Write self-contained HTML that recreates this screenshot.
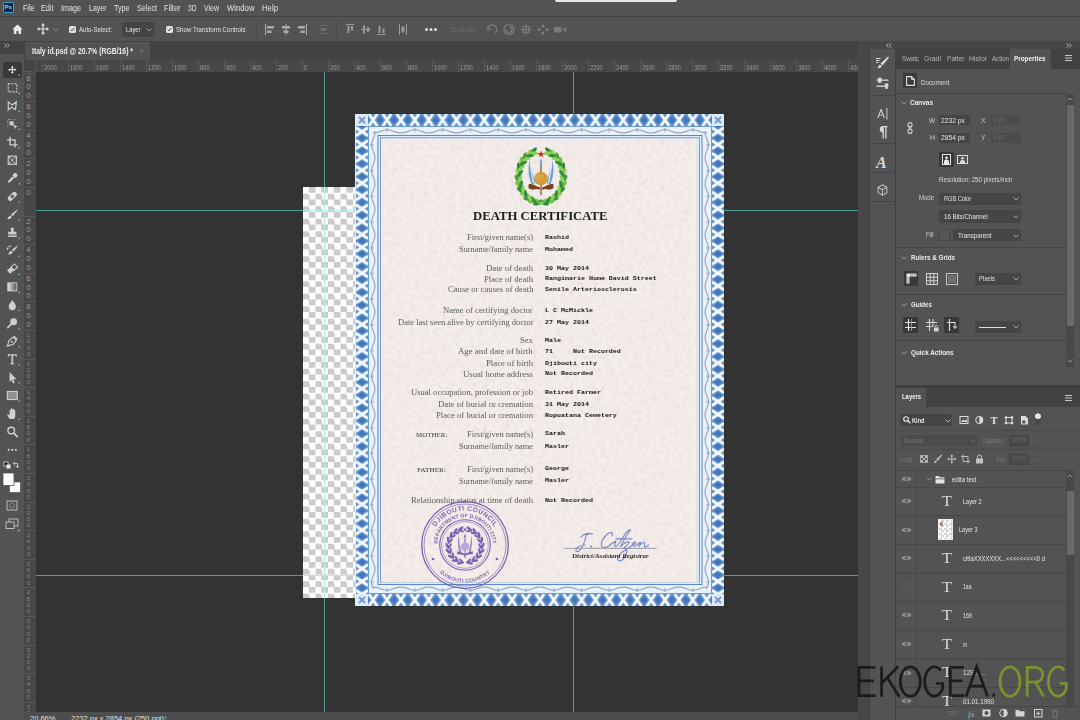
<!DOCTYPE html>
<html><head><meta charset="utf-8">
<style>
*{box-sizing:border-box;margin:0;padding:0}
html,body{width:1080px;height:720px;overflow:hidden;background:#535353;font-family:"Liberation Sans",sans-serif;color:#dcdcdc}
.a{position:absolute}
.t{position:absolute;white-space:nowrap;font-size:9px;line-height:10px;color:#dedede;transform-origin:0 50%}
.b{font-weight:bold}
.dim{color:#787878}
#menubar{left:0;top:0;width:1080px;height:16px;background:#535353}
#optbar{left:0;top:17px;width:1080px;height:24px;background:#535353}
#sep1{left:0;top:16px;width:1080px;height:1px;background:#434343}
#tabbar{left:0;top:41px;width:1080px;height:19px;background:#424242}
#tab{left:25px;top:42px;width:125px;height:18px;background:#535353}
#tools{left:0;top:54px;width:24px;height:666px;background:#535353}
#hruler{left:24px;top:60px;width:834px;height:12px;background:#474747;overflow:hidden}
#vruler{left:24px;top:72px;width:12px;height:640px;background:#474747;overflow:hidden}
#canvas{left:36px;top:72px;width:822px;height:640px;background:#333333;overflow:hidden}
#status{left:24px;top:712px;width:834px;height:8px;background:#4d4d4d;overflow:hidden}
#rgap{left:858px;top:41px;width:222px;height:679px;background:#474747}
#istrip{left:870px;top:49px;width:25px;height:671px;background:#535353}
#props{left:896px;top:49px;width:184px;height:337px;background:#535353;overflow:hidden}
#layers{left:896px;top:388px;width:184px;height:332px;background:#535353;overflow:hidden}
.hl{position:absolute;height:1px;background:#464646}
.rt{position:absolute;top:0;width:1px;height:12px;background:#585858}
.rl{position:absolute;top:2.500px;font-size:7px;line-height:10px;color:#9c9c9c;white-space:nowrap;transform:scaleX(.82);transform-origin:0 50%}
.vt{position:absolute;left:0;width:12px;height:1px;background:#585858}
.vl{position:absolute;left:1.5px;font-size:8px;line-height:8.8px;color:#9a9a9a;width:6px;text-align:center;word-break:break-all}
.g{position:absolute;background:#4f9f98}
.inp{position:absolute;background:#454545;border-radius:1px}
.sel{position:absolute;background:#3a3a3a;border-radius:1px}
</style></head><body>

<!-- base regions -->
<div id="menubar" class="a"></div>
<div id="sep1" class="a"></div>
<div id="optbar" class="a"></div>
<div id="tabbar" class="a"></div>
<div id="tab" class="a"></div>
<div id="tools" class="a"></div>
<div id="rgap" class="a"></div>
<div id="istrip" class="a"></div>
<!-- menubar -->
<div class="a" style="left:3px;top:2px;width:11px;height:11px;background:#0b2a3a;border:1px solid #3aa0d8;border-radius:2px"></div>
<div class="t b" style="left:4.5px;top:3px;font-size:6px;color:#9fd6ff;line-height:9px">Ps</div>
<div class="t" style="left:22.5px;top:3.1px;font-size:9px;line-height:10.8px;color:#e2e2e2;transform:scaleX(0.793);">File</div>
<div class="t" style="left:41px;top:3.1px;font-size:9px;line-height:10.8px;color:#e2e2e2;transform:scaleX(0.806);">Edit</div>
<div class="t" style="left:61px;top:3.1px;font-size:9px;line-height:10.8px;color:#e2e2e2;transform:scaleX(0.800);">Image</div>
<div class="t" style="left:89px;top:3.1px;font-size:9px;line-height:10.8px;color:#e2e2e2;transform:scaleX(0.777);">Layer</div>
<div class="t" style="left:114px;top:3.1px;font-size:9px;line-height:10.8px;color:#e2e2e2;transform:scaleX(0.794);">Type</div>
<div class="t" style="left:137px;top:3.1px;font-size:9px;line-height:10.8px;color:#e2e2e2;transform:scaleX(0.800);">Select</div>
<div class="t" style="left:164px;top:3.1px;font-size:9px;line-height:10.8px;color:#e2e2e2;transform:scaleX(0.825);">Filter</div>
<div class="t" style="left:188px;top:3.1px;font-size:9px;line-height:10.8px;color:#e2e2e2;transform:scaleX(0.739);">3D</div>
<div class="t" style="left:204px;top:3.1px;font-size:9px;line-height:10.8px;color:#e2e2e2;transform:scaleX(0.775);">View</div>
<div class="t" style="left:227px;top:3.1px;font-size:9px;line-height:10.8px;color:#e2e2e2;transform:scaleX(0.859);">Window</div>
<div class="t" style="left:262px;top:3.1px;font-size:9px;line-height:10.8px;color:#e2e2e2;transform:scaleX(0.864);">Help</div>
<div class="a" style="left:555px;top:0;width:122px;height:2px;background:#e6e6e6;border-radius:0 0 2px 2px"></div>
<!-- options bar -->
<svg class="a" style="left:12px;top:24px" width="11" height="10.500" viewBox="0 0 13 12"><path d="M6.5 0.5L0.5 6H2.2V11.5H5.2V8H7.8V11.5H10.8V6H12.5Z" fill="#e8e8e8"/></svg>
<svg class="a" style="left:37px;top:23px" width="12" height="12" viewBox="0 0 12 12"><path d="M6 0L8 2.4H6.6V5.4H9.6V4L12 6L9.6 8V6.6H6.6V9.6H8L6 12L4 9.6H5.4V6.6H2.4V8L0 6L2.4 4V5.4H5.4V2.4H4Z" fill="#e0e0e0"/></svg>
<svg class="a" style="left:53px;top:28px" width="6" height="4" viewBox="0 0 6 4"><path d="M0.5 0.5L3 3L5.5 0.5" stroke="#8a8a8a" fill="none"/></svg>
<div class="a" style="left:69px;top:26px;width:7px;height:7px;background:#e0e0e0;border-radius:1.5px"></div>
<svg class="a" style="left:70px;top:27px" width="5" height="5" viewBox="0 0 5 5"><path d="M0.7 2.5L2 3.8L4.3 1" stroke="#444" stroke-width="1" fill="none"/></svg>
<div class="t" style="left:79px;top:24.7px;font-size:8px;line-height:9.6px;color:#e2e2e2;transform:scaleX(0.757);">Auto-Select:</div>
<div class="a" style="left:122px;top:22px;width:33px;height:15px;background:#454545;border-radius:2px"></div>
<div class="t" style="left:126px;top:24.7px;font-size:8px;line-height:9.6px;color:#e2e2e2;transform:scaleX(0.725);">Layer</div>
<svg class="a" style="left:146px;top:28px" width="6" height="4" viewBox="0 0 6 4"><path d="M0.5 0.5L3 3L5.5 0.5" stroke="#9a9a9a" fill="none"/></svg>
<div class="a" style="left:166px;top:26px;width:7px;height:7px;background:#e0e0e0;border-radius:1.5px"></div>
<svg class="a" style="left:167px;top:27px" width="5" height="5" viewBox="0 0 5 5"><path d="M0.7 2.5L2 3.8L4.3 1" stroke="#444" stroke-width="1" fill="none"/></svg>
<div class="t" style="left:175.5px;top:24.7px;font-size:8px;line-height:9.6px;color:#e2e2e2;transform:scaleX(0.770);">Show Transform Controls</div>
<div class="a" style="left:255.500px;top:22px;width:1px;height:15px;background:#484848"></div>
<!-- align icons -->
<svg class="a" style="left:264px;top:23px" width="150" height="13" viewBox="0 0 150 13">
<g fill="#ababab">
<rect x="1" y="1" width="1" height="11"/><rect x="3" y="3" width="7" height="2.5"/><rect x="3" y="7.5" width="4.5" height="2.5"/>
<rect x="21.5" y="1" width="1" height="11"/><rect x="18" y="3" width="8" height="2.5"/><rect x="19.5" y="7.5" width="5" height="2.5"/>
<rect x="42" y="1" width="1" height="11"/><rect x="34" y="3" width="7" height="2.5"/><rect x="36.5" y="7.5" width="4.5" height="2.5"/>
</g>
<g fill="#6c6c6c"><rect x="55" y="2" width="9" height="1"/><rect x="55" y="10" width="9" height="1"/><rect x="56.5" y="5" width="6" height="3"/></g>
<g fill="#9a9a9a">
<rect x="82" y="1" width="8" height="1"/><rect x="83.5" y="3" width="2" height="7"/><rect x="87" y="3" width="2" height="4.5"/>
<rect x="97" y="6" width="10" height="1"/><rect x="99" y="2.5" width="2" height="8"/><rect x="103" y="4" width="2" height="5"/>
<rect x="113" y="11" width="9" height="1"/><rect x="114.500" y="3" width="2" height="7"/><rect x="118.500" y="5.500" width="2" height="4.500"/>
<rect x="135" y="1" width="1" height="11"/><rect x="142" y="1" width="1" height="11"/><rect x="137.500" y="3.500" width="3" height="6"/>
</g></svg>
<div class="a" style="left:336px;top:22px;width:1px;height:15px;background:#484848"></div>
<div class="a" style="left:425px;top:28px;width:2.5px;height:2.5px;border-radius:2px;background:#e0e0e0;box-shadow:4.5px 0 0 #e0e0e0,9px 0 0 #e0e0e0"></div>
<div class="t" style="left:450px;top:25px;font-size:7.5px;line-height:9px;color:#6c6c6c;transform:scaleX(0.800);">3D Mode:</div>
<svg class="a" style="left:485px;top:22px" width="90" height="15" viewBox="0 0 90 15"><g stroke="#7c7c7c" fill="none" stroke-width="1.2">
<path d="M3 9A4.500 4.500 0 1 1 10 11M3 5L6 8"/><circle cx="24" cy="7.500" r="5"/><path d="M21 7.500A3 3 0 1 0 24 4.500"/>
<path d="M41 2V13M35.500 7.500H46.500M38 4.500H44V10.500H38Z"/>
</g><g fill="#7c7c7c"><circle cx="58" cy="4" r="1.600"/><circle cx="54" cy="7.500" r="1.600"/><circle cx="62" cy="7.500" r="1.600"/><circle cx="58" cy="11" r="1.600"/>
<rect x="69" y="5" width="7.500" height="5.500" rx="1"/><path d="M77.500 7.500L81 4.800V10.500Z"/></g></svg>
<!-- tab -->
<svg class="a" style="left:3.500px;top:42.500px" width="6" height="5" viewBox="0 0 6 5"><path d="M0.500 0.500L2.300 2.500L0.500 4.500M3.300 0.500L5.100 2.500L3.300 4.500" stroke="#c4c4c4" stroke-width=".9" fill="none"/></svg>
<div class="t" style="left:32px;top:45.9px;font-size:8.5px;line-height:10.2px;color:#ececec;font-weight:bold;transform:scaleX(0.802);">Italy id.psd @ 20.7% (RGB/16) *</div>
<div class="t" style="left:139px;top:45.500px;font-size:8px;color:#808080">&#215;</div>

<!-- tools -->
<div class="a" style="left:3px;top:61.500px;width:19px;height:16.500px;background:#383838;border-radius:2px"></div>
<svg class="a" style="left:0;top:0" width="24" height="540" viewBox="0 0 24 540"><g transform="translate(12.3,69.7) scale(.9)"><path transform="scale(.82)" d="M0 -5.500L2 -3.100H0.700V-0.700H3.100V-2L5.500 0L3.100 2V0.700H0.700V3.100H2L0 5.500L-2 3.100H-0.700V0.700H-3.100V2L-5.500 0L-3.100 -2V-0.700H-0.700V-3.100H-2Z" fill="#f0f0f0"/><path d="M8.300 4.800L8.300 6.800L6.300 6.800Z" fill="#bdbdbd"/></g><g transform="translate(12.3,87.8) scale(.9)"><rect x="-4.500" y="-4.500" width="9.500" height="9" fill="none" stroke="#cfcfcf" stroke-width="1.200" stroke-dasharray="2.200 1.300"/><path d="M8.300 4.800L8.300 6.800L6.300 6.800Z" fill="#bdbdbd"/></g><g transform="translate(12.3,105.9) scale(.9)"><path d="M-4.500 -4.500L0 -1L4.500 -4.500L3.500 4L-1 1.500L-4.500 4.500Z" fill="none" stroke="#cfcfcf" stroke-width="1.300"/><path d="M8.300 4.800L8.300 6.800L6.300 6.800Z" fill="#bdbdbd"/></g><g transform="translate(12.3,124.0) scale(.9)"><path d="M-5 -1V-5H-1M1.500 -5H3.500M-5 1.500V3.500" fill="none" stroke="#9a9a9a" stroke-width="1"/><rect x="-3" y="-3" width="4.500" height="4.500" fill="#cfcfcf"/><path d="M1 0.500L6 3L3.700 3.700L3 6Z" fill="#cfcfcf"/><path d="M8.300 4.800L8.300 6.800L6.300 6.800Z" fill="#bdbdbd"/></g><g transform="translate(12.3,142.1) scale(.9)"><path d="M-2.500 -6V3H6M-6 -2.500H3V6" fill="none" stroke="#cfcfcf" stroke-width="1.500"/><path d="M8.300 4.800L8.300 6.800L6.300 6.800Z" fill="#bdbdbd"/></g><g transform="translate(12.3,160.2) scale(.9)"><rect x="-4.500" y="-4.500" width="9" height="9" fill="none" stroke="#cfcfcf" stroke-width="1.300"/><path d="M-4.500 -4.500L4.500 4.500M4.500 -4.500L-4.500 4.500" stroke="#cfcfcf" stroke-width="1.100"/></g><g transform="translate(12.3,178.3) scale(.9)"><path d="M-5 5L-4.300 2.500L0.500 -2.300L2.300 -0.500L-2.500 4.300Z" fill="#cfcfcf"/><path d="M0 -3.500L1.500 -5A1.800 1.800 0 0 1 5 -1.500L3.500 0Z" fill="#cfcfcf"/><path d="M8.300 4.800L8.300 6.800L6.300 6.800Z" fill="#bdbdbd"/></g><g transform="translate(12.3,196.4) scale(.9)"><g transform="rotate(-45)"><rect x="-6" y="-2.800" width="12" height="5.600" rx="2.600" fill="#cfcfcf"/><rect x="-1.800" y="-1.800" width="3.600" height="3.600" fill="#6a6a6a"/></g><path d="M8.300 4.800L8.300 6.800L6.300 6.800Z" fill="#bdbdbd"/></g><g transform="translate(12.3,214.5) scale(.9)"><path d="M5.500 -5.500L6 -5L0.500 2L-1.500 0Z" fill="#cfcfcf"/><path d="M-2.300 1L-0.500 2.800C-1.500 5 -4 5.500 -6 5C-4.500 4 -4.500 2 -2.300 1Z" fill="#cfcfcf"/><path d="M8.300 4.800L8.300 6.800L6.300 6.800Z" fill="#bdbdbd"/></g><g transform="translate(12.3,232.6) scale(.9)"><path d="M-1.800 -5.500H1.800L1.200 -1H4.500V2H-4.500V-1H-1.200Z" fill="#cfcfcf"/><rect x="-5" y="3.200" width="10" height="1.600" fill="#cfcfcf"/><path d="M8.300 4.800L8.300 6.800L6.300 6.800Z" fill="#bdbdbd"/></g><g transform="translate(12.3,250.7) scale(.9)"><path d="M5.500 -5.500L6 -5L1.500 1L-0.500 -1Z" fill="#cfcfcf"/><path d="M-1.300 0L0.500 1.800C-0.500 4 -3 4.500 -5 4C-3.500 3 -3.500 1 -1.300 0Z" fill="#cfcfcf"/><path d="M-5.500 -2A3.500 3.500 0 0 1 -1 -5" fill="none" stroke="#cfcfcf" stroke-width="1.100"/><path d="M-6.500 -3L-5.500 -0.500L-3.800 -2.500Z" fill="#cfcfcf"/><path d="M8.300 4.800L8.300 6.800L6.300 6.800Z" fill="#bdbdbd"/></g><g transform="translate(12.3,268.8) scale(.9)"><g transform="rotate(-40)"><rect x="-5.500" y="-2.600" width="6" height="5.200" fill="#cfcfcf"/><rect x="0.500" y="-2.600" width="5" height="5.200" fill="none" stroke="#cfcfcf" stroke-width="1.100"/></g><path d="M8.300 4.800L8.300 6.800L6.300 6.800Z" fill="#bdbdbd"/></g><g transform="translate(12.3,286.9) scale(.9)"><defs><linearGradient id="gr" x1="0" x2="1"><stop offset="0" stop-color="#e4e4e4"/><stop offset="1" stop-color="#555"/></linearGradient></defs><rect x="-5" y="-4.500" width="10" height="9" fill="url(#gr)" stroke="#cfcfcf" stroke-width="1"/><path d="M8.300 4.800L8.300 6.800L6.300 6.800Z" fill="#bdbdbd"/></g><g transform="translate(12.3,305.0) scale(.9)"><path d="M0 -5.500C2 -2.500 4 -0.500 4 1.800A4 4 0 0 1 -4 1.800C-4 -0.500 -2 -2.500 0 -5.500Z" fill="#cfcfcf"/><path d="M8.300 4.800L8.300 6.800L6.300 6.800Z" fill="#bdbdbd"/></g><g transform="translate(12.3,323.1) scale(.9)"><circle cx="1.500" cy="-1.500" r="3.800" fill="#cfcfcf"/><path d="M-1.500 1.500L-5 5" stroke="#cfcfcf" stroke-width="2" stroke-linecap="round"/><path d="M8.300 4.800L8.300 6.800L6.300 6.800Z" fill="#bdbdbd"/></g><g transform="translate(12.3,341.2) scale(.9)"><path d="M-5.500 5.500L-3.500 -1L1 -4.500L4.500 -1L1 3.500Z" fill="none" stroke="#cfcfcf" stroke-width="1.300"/><circle cx="-0.500" cy="0.500" r="1.100" fill="#cfcfcf"/><path d="M2 -5.500L5.500 -2" stroke="#cfcfcf" stroke-width="1.300"/><path d="M8.300 4.800L8.300 6.800L6.300 6.800Z" fill="#bdbdbd"/></g><g transform="translate(12.3,359.3) scale(.9)"><path d="M-5 -5.500H5V-2.800H4L3.600 -4.100H0.900V4.300L2.300 4.600V5.500H-2.300V4.600L-0.900 4.300V-4.100H-3.600L-4 -2.800H-5Z" fill="#cfcfcf"/><path d="M8.300 4.800L8.300 6.800L6.300 6.800Z" fill="#bdbdbd"/></g><g transform="translate(12.3,377.4) scale(.9)"><path d="M-3 -6L4.500 2H0.800L2.800 6L1 6.800L-1 2.800L-3 5Z" fill="#cfcfcf"/><path d="M8.300 4.800L8.300 6.800L6.300 6.800Z" fill="#bdbdbd"/></g><g transform="translate(12.3,395.5) scale(.9)"><rect x="-5.500" y="-4.500" width="11" height="9" fill="#8f8f8f" stroke="#cfcfcf" stroke-width="1.200"/><path d="M8.300 4.800L8.300 6.800L6.300 6.800Z" fill="#bdbdbd"/></g><g transform="translate(12.3,413.6) scale(.9)"><path d="M-3 6C-4 4 -6 2 -5.500 1C-4.800 0 -3.800 1 -3 2V-3.500C-3 -4.800 -1.500 -4.800 -1.500 -3.500V-5C-1.500 -6.300 0.200 -6.300 0.200 -5V-4.500C0.200 -5.800 1.800 -5.800 1.800 -4.500V-3.500C1.800 -4.600 3.300 -4.600 3.300 -3.500V2C3.300 4 2.500 5 2 6Z" fill="#cfcfcf"/><path d="M8.300 4.800L8.300 6.800L6.300 6.800Z" fill="#bdbdbd"/></g><g transform="translate(12.3,431.7) scale(.9)"><circle cx="-1.200" cy="-1.200" r="3.700" fill="none" stroke="#cfcfcf" stroke-width="1.500"/><path d="M1.700 1.700L5.500 5.500" stroke="#cfcfcf" stroke-width="2" stroke-linecap="round"/></g><g transform="translate(12.3,449.8) scale(.9)"><circle cx="-4" cy="0" r="1.200" fill="#cfcfcf"/><circle cx="0" cy="0" r="1.200" fill="#cfcfcf"/><circle cx="4" cy="0" r="1.200" fill="#cfcfcf"/></g><rect x="4" y="462" width="4" height="4" fill="#111" stroke="#ddd" stroke-width=".8"/><rect x="6.500" y="464.500" width="4" height="4" fill="#eee"/><path d="M13.500 463.500H17.500V467.500M15 461.800L13.200 463.500L15 465.200M15.800 466L17.500 467.800L19.200 466" fill="none" stroke="#ccc" stroke-width=".9"/><rect x="9.500" y="482" width="11" height="10.500" fill="#fff" stroke="#444" stroke-width=".6"/><rect x="3" y="473" width="11" height="12.500" fill="#fff" stroke="#555" stroke-width=".8"/><rect x="7" y="501" width="10" height="9" fill="none" stroke="#bbb" stroke-width="1"/><circle cx="12" cy="505.500" r="2.300" fill="none" stroke="#bbb" stroke-width=".9" stroke-dasharray="1 .8"/><rect x="9" y="519" width="9" height="7" fill="none" stroke="#bbb" stroke-width="1"/><rect x="6" y="522" width="8" height="6.500" fill="#535353" stroke="#bbb" stroke-width="1"/><path d="M19.500 529V531.200H17.300Z" fill="#bbb"/></svg>

<div id="hruler" class="a"><div class="rt" style="left:-8px"></div><div class="rl" style="left:-6px">2200</div><div class="rt" style="left:-1.5px;top:10px;background:#4f4f4f"></div><div class="rt" style="left:5.0px;top:9px;background:#4f4f4f"></div><div class="rt" style="left:11.5px;top:10px;background:#4f4f4f"></div><div class="rt" style="left:18px"></div><div class="rl" style="left:20px">2000</div><div class="rt" style="left:24.5px;top:10px;background:#4f4f4f"></div><div class="rt" style="left:31.0px;top:9px;background:#4f4f4f"></div><div class="rt" style="left:37.5px;top:10px;background:#4f4f4f"></div><div class="rt" style="left:44px"></div><div class="rl" style="left:46px">1800</div><div class="rt" style="left:50.5px;top:10px;background:#4f4f4f"></div><div class="rt" style="left:57.0px;top:9px;background:#4f4f4f"></div><div class="rt" style="left:63.5px;top:10px;background:#4f4f4f"></div><div class="rt" style="left:70px"></div><div class="rl" style="left:72px">1600</div><div class="rt" style="left:76.5px;top:10px;background:#4f4f4f"></div><div class="rt" style="left:83.0px;top:9px;background:#4f4f4f"></div><div class="rt" style="left:89.5px;top:10px;background:#4f4f4f"></div><div class="rt" style="left:96px"></div><div class="rl" style="left:98px">1400</div><div class="rt" style="left:102.5px;top:10px;background:#4f4f4f"></div><div class="rt" style="left:109.0px;top:9px;background:#4f4f4f"></div><div class="rt" style="left:115.5px;top:10px;background:#4f4f4f"></div><div class="rt" style="left:122px"></div><div class="rl" style="left:124px">1200</div><div class="rt" style="left:128.5px;top:10px;background:#4f4f4f"></div><div class="rt" style="left:135.0px;top:9px;background:#4f4f4f"></div><div class="rt" style="left:141.5px;top:10px;background:#4f4f4f"></div><div class="rt" style="left:148px"></div><div class="rl" style="left:150px">1000</div><div class="rt" style="left:154.5px;top:10px;background:#4f4f4f"></div><div class="rt" style="left:161.0px;top:9px;background:#4f4f4f"></div><div class="rt" style="left:167.5px;top:10px;background:#4f4f4f"></div><div class="rt" style="left:174px"></div><div class="rl" style="left:176px">800</div><div class="rt" style="left:180.5px;top:10px;background:#4f4f4f"></div><div class="rt" style="left:187.0px;top:9px;background:#4f4f4f"></div><div class="rt" style="left:193.5px;top:10px;background:#4f4f4f"></div><div class="rt" style="left:200px"></div><div class="rl" style="left:202px">600</div><div class="rt" style="left:206.5px;top:10px;background:#4f4f4f"></div><div class="rt" style="left:213.0px;top:9px;background:#4f4f4f"></div><div class="rt" style="left:219.5px;top:10px;background:#4f4f4f"></div><div class="rt" style="left:226px"></div><div class="rl" style="left:228px">400</div><div class="rt" style="left:232.5px;top:10px;background:#4f4f4f"></div><div class="rt" style="left:239.0px;top:9px;background:#4f4f4f"></div><div class="rt" style="left:245.5px;top:10px;background:#4f4f4f"></div><div class="rt" style="left:252px"></div><div class="rl" style="left:254px">200</div><div class="rt" style="left:258.5px;top:10px;background:#4f4f4f"></div><div class="rt" style="left:265.0px;top:9px;background:#4f4f4f"></div><div class="rt" style="left:271.5px;top:10px;background:#4f4f4f"></div><div class="rt" style="left:278px"></div><div class="rl" style="left:280px">0</div><div class="rt" style="left:284.5px;top:10px;background:#4f4f4f"></div><div class="rt" style="left:291.0px;top:9px;background:#4f4f4f"></div><div class="rt" style="left:297.5px;top:10px;background:#4f4f4f"></div><div class="rt" style="left:304px"></div><div class="rl" style="left:306px">200</div><div class="rt" style="left:310.5px;top:10px;background:#4f4f4f"></div><div class="rt" style="left:317.0px;top:9px;background:#4f4f4f"></div><div class="rt" style="left:323.5px;top:10px;background:#4f4f4f"></div><div class="rt" style="left:330px"></div><div class="rl" style="left:332px">400</div><div class="rt" style="left:336.5px;top:10px;background:#4f4f4f"></div><div class="rt" style="left:343.0px;top:9px;background:#4f4f4f"></div><div class="rt" style="left:349.5px;top:10px;background:#4f4f4f"></div><div class="rt" style="left:356px"></div><div class="rl" style="left:358px">600</div><div class="rt" style="left:362.5px;top:10px;background:#4f4f4f"></div><div class="rt" style="left:369.0px;top:9px;background:#4f4f4f"></div><div class="rt" style="left:375.5px;top:10px;background:#4f4f4f"></div><div class="rt" style="left:382px"></div><div class="rl" style="left:384px">800</div><div class="rt" style="left:388.5px;top:10px;background:#4f4f4f"></div><div class="rt" style="left:395.0px;top:9px;background:#4f4f4f"></div><div class="rt" style="left:401.5px;top:10px;background:#4f4f4f"></div><div class="rt" style="left:408px"></div><div class="rl" style="left:410px">1000</div><div class="rt" style="left:414.5px;top:10px;background:#4f4f4f"></div><div class="rt" style="left:421.0px;top:9px;background:#4f4f4f"></div><div class="rt" style="left:427.5px;top:10px;background:#4f4f4f"></div><div class="rt" style="left:434px"></div><div class="rl" style="left:436px">1200</div><div class="rt" style="left:440.5px;top:10px;background:#4f4f4f"></div><div class="rt" style="left:447.0px;top:9px;background:#4f4f4f"></div><div class="rt" style="left:453.5px;top:10px;background:#4f4f4f"></div><div class="rt" style="left:460px"></div><div class="rl" style="left:462px">1400</div><div class="rt" style="left:466.5px;top:10px;background:#4f4f4f"></div><div class="rt" style="left:473.0px;top:9px;background:#4f4f4f"></div><div class="rt" style="left:479.5px;top:10px;background:#4f4f4f"></div><div class="rt" style="left:486px"></div><div class="rl" style="left:488px">1600</div><div class="rt" style="left:492.5px;top:10px;background:#4f4f4f"></div><div class="rt" style="left:499.0px;top:9px;background:#4f4f4f"></div><div class="rt" style="left:505.5px;top:10px;background:#4f4f4f"></div><div class="rt" style="left:512px"></div><div class="rl" style="left:514px">1800</div><div class="rt" style="left:518.5px;top:10px;background:#4f4f4f"></div><div class="rt" style="left:525.0px;top:9px;background:#4f4f4f"></div><div class="rt" style="left:531.5px;top:10px;background:#4f4f4f"></div><div class="rt" style="left:538px"></div><div class="rl" style="left:540px">2000</div><div class="rt" style="left:544.5px;top:10px;background:#4f4f4f"></div><div class="rt" style="left:551.0px;top:9px;background:#4f4f4f"></div><div class="rt" style="left:557.5px;top:10px;background:#4f4f4f"></div><div class="rt" style="left:564px"></div><div class="rl" style="left:566px">2200</div><div class="rt" style="left:570.5px;top:10px;background:#4f4f4f"></div><div class="rt" style="left:577.0px;top:9px;background:#4f4f4f"></div><div class="rt" style="left:583.5px;top:10px;background:#4f4f4f"></div><div class="rt" style="left:590px"></div><div class="rl" style="left:592px">2400</div><div class="rt" style="left:596.5px;top:10px;background:#4f4f4f"></div><div class="rt" style="left:603.0px;top:9px;background:#4f4f4f"></div><div class="rt" style="left:609.5px;top:10px;background:#4f4f4f"></div><div class="rt" style="left:616px"></div><div class="rl" style="left:618px">2600</div><div class="rt" style="left:622.5px;top:10px;background:#4f4f4f"></div><div class="rt" style="left:629.0px;top:9px;background:#4f4f4f"></div><div class="rt" style="left:635.5px;top:10px;background:#4f4f4f"></div><div class="rt" style="left:642px"></div><div class="rl" style="left:644px">2800</div><div class="rt" style="left:648.5px;top:10px;background:#4f4f4f"></div><div class="rt" style="left:655.0px;top:9px;background:#4f4f4f"></div><div class="rt" style="left:661.5px;top:10px;background:#4f4f4f"></div><div class="rt" style="left:668px"></div><div class="rl" style="left:670px">3000</div><div class="rt" style="left:674.5px;top:10px;background:#4f4f4f"></div><div class="rt" style="left:681.0px;top:9px;background:#4f4f4f"></div><div class="rt" style="left:687.5px;top:10px;background:#4f4f4f"></div><div class="rt" style="left:694px"></div><div class="rl" style="left:696px">3200</div><div class="rt" style="left:700.5px;top:10px;background:#4f4f4f"></div><div class="rt" style="left:707.0px;top:9px;background:#4f4f4f"></div><div class="rt" style="left:713.5px;top:10px;background:#4f4f4f"></div><div class="rt" style="left:720px"></div><div class="rl" style="left:722px">3400</div><div class="rt" style="left:726.5px;top:10px;background:#4f4f4f"></div><div class="rt" style="left:733.0px;top:9px;background:#4f4f4f"></div><div class="rt" style="left:739.5px;top:10px;background:#4f4f4f"></div><div class="rt" style="left:746px"></div><div class="rl" style="left:748px">3600</div><div class="rt" style="left:752.5px;top:10px;background:#4f4f4f"></div><div class="rt" style="left:759.0px;top:9px;background:#4f4f4f"></div><div class="rt" style="left:765.5px;top:10px;background:#4f4f4f"></div><div class="rt" style="left:772px"></div><div class="rl" style="left:774px">3800</div><div class="rt" style="left:778.5px;top:10px;background:#4f4f4f"></div><div class="rt" style="left:785.0px;top:9px;background:#4f4f4f"></div><div class="rt" style="left:791.5px;top:10px;background:#4f4f4f"></div><div class="rt" style="left:798px"></div><div class="rl" style="left:800px">4000</div><div class="rt" style="left:804.5px;top:10px;background:#4f4f4f"></div><div class="rt" style="left:811.0px;top:9px;background:#4f4f4f"></div><div class="rt" style="left:817.5px;top:10px;background:#4f4f4f"></div><div class="rt" style="left:824px"></div><div class="rl" style="left:826px">4200</div><div class="rt" style="left:830.5px;top:10px;background:#4f4f4f"></div><div class="rt" style="left:837.0px;top:9px;background:#4f4f4f"></div><div class="rt" style="left:843.5px;top:10px;background:#4f4f4f"></div><div class="rt" style="left:850px"></div><div class="rl" style="left:852px">4400</div><div class="rt" style="left:856.5px;top:10px;background:#4f4f4f"></div><div class="rt" style="left:863.0px;top:9px;background:#4f4f4f"></div><div class="rt" style="left:869.5px;top:10px;background:#4f4f4f"></div></div>
<div id="vruler" class="a"><div class="vt" style="top:0.6px"></div><div class="vl" style="top:2.6px">8<br>0<br>0</div><div class="vt" style="top:29.2px"></div><div class="vl" style="top:31.2px">6<br>0<br>0</div><div class="vt" style="top:57.8px"></div><div class="vl" style="top:59.8px">4<br>0<br>0</div><div class="vt" style="top:86.4px"></div><div class="vl" style="top:88.4px">2<br>0<br>0</div><div class="vt" style="top:115.0px"></div><div class="vl" style="top:117.0px">0</div><div class="vt" style="top:143.6px"></div><div class="vl" style="top:145.6px">2<br>0<br>0</div><div class="vt" style="top:172.2px"></div><div class="vl" style="top:174.2px">4<br>0<br>0</div><div class="vt" style="top:200.8px"></div><div class="vl" style="top:202.8px">6<br>0<br>0</div><div class="vt" style="top:229.4px"></div><div class="vl" style="top:231.4px">8<br>0<br>0</div><div class="vt" style="top:258.0px"></div><div class="vl" style="top:260.0px;font-size:6px;line-height:6.3px;color:#8a8a8a">1<br>0<br>0<br>0</div><div class="vt" style="top:286.6px"></div><div class="vl" style="top:288.6px;font-size:6px;line-height:6.3px;color:#8a8a8a">1<br>2<br>0<br>0</div><div class="vt" style="top:315.2px"></div><div class="vl" style="top:317.2px;font-size:6px;line-height:6.3px;color:#8a8a8a">1<br>4<br>0<br>0</div><div class="vt" style="top:343.8px"></div><div class="vl" style="top:345.8px;font-size:6px;line-height:6.3px;color:#8a8a8a">1<br>6<br>0<br>0</div><div class="vt" style="top:372.4px"></div><div class="vl" style="top:374.4px;font-size:6px;line-height:6.3px;color:#8a8a8a">1<br>8<br>0<br>0</div><div class="vt" style="top:401.0px"></div><div class="vl" style="top:403.0px;font-size:6px;line-height:6.3px;color:#8a8a8a">2<br>0<br>0<br>0</div><div class="vt" style="top:429.6px"></div><div class="vl" style="top:431.6px;font-size:6px;line-height:6.3px;color:#8a8a8a">2<br>2<br>0<br>0</div><div class="vt" style="top:458.2px"></div><div class="vl" style="top:460.2px;font-size:6px;line-height:6.3px;color:#8a8a8a">2<br>4<br>0<br>0</div><div class="vt" style="top:486.8px"></div><div class="vl" style="top:488.8px;font-size:6px;line-height:6.3px;color:#8a8a8a">2<br>6<br>0<br>0</div><div class="vt" style="top:515.4px"></div><div class="vl" style="top:517.4px;font-size:6px;line-height:6.3px;color:#8a8a8a">2<br>8<br>0<br>0</div><div class="vt" style="top:544.0px"></div><div class="vl" style="top:546.0px;font-size:6px;line-height:6.3px;color:#8a8a8a">3<br>0<br>0<br>0</div><div class="vt" style="top:572.6px"></div><div class="vl" style="top:574.6px;font-size:6px;line-height:6.3px;color:#8a8a8a">3<br>2<br>0<br>0</div><div class="vt" style="top:601.2px"></div><div class="vl" style="top:603.2px;font-size:6px;line-height:6.3px;color:#8a8a8a">3<br>4<br>0<br>0</div><div class="vt" style="top:629.8px"></div><div class="vl" style="top:631.8px;font-size:6px;line-height:6.3px;color:#8a8a8a">3<br>6<br>0<br>0</div><div class="vt" style="top:658.4px"></div><div class="vl" style="top:660.4px;font-size:6px;line-height:6.3px;color:#8a8a8a">3<br>8<br>0<br>0</div></div>
<div class="a" style="left:24px;top:60px;width:12px;height:12px;background:#444;border-right:1px dotted #666;border-bottom:1px dotted #666"></div>
<div id="canvas" class="a">
<!-- coordinates inside canvas: abs - (36,72) -->
<div class="g" style="left:288px;top:0;width:1px;height:640px"></div>
<div class="g" style="left:537px;top:0;width:1px;height:640px"></div>
<div class="g" style="left:0;top:138px;width:826px;height:1px"></div>
<div class="g" style="left:0;top:502.500px;width:826px;height:1px"></div>
<div class="a" style="left:267px;top:115px;width:53px;height:410.500px;background:repeating-conic-gradient(#cbcbcb 0 25%,#fff 0 50%) 0 0/12.500px 12.500px"></div>
<div class="a" style="left:288px;top:115px;width:1px;height:410.500px;background:#b6ece6"></div>
<div class="a" style="left:267px;top:138px;width:53px;height:1px;background:#b6ece6"></div>
<div class="a" style="left:267px;top:502.500px;width:53px;height:1px;background:#b6ece6"></div>
<div class="a" style="left:318.500px;top:42px;width:1.500px;height:492px;background:#e4ecf6"></div>
<div id="doc" class="a" style="left:320px;top:42px;width:368px;height:492px;background:#e9f1fb;overflow:hidden">
<svg class="a" style="left:0;top:0" width="368" height="492" viewBox="0 0 368 492"><defs><pattern id="px" width="13.9" height="12" patternUnits="userSpaceOnUse" patternTransform="translate(10.150,0)"><rect width="13.9" height="12" fill="#6293cf"/><path d="M13.9 6m-3.300 0l3.300 -4.300l3.300 4.300l-3.300 4.300Z" fill="#4176b9"/><path d="M-3.300 6L0 1.700L3.300 6L0 10.300Z" fill="#4176b9"/><path d="M3.35 0.800L10.55 11.200M10.55 0.800L3.35 11.200" stroke="#f6f9fd" stroke-width="2.800" stroke-linecap="round"/></pattern><pattern id="py" width="12" height="12.85" patternUnits="userSpaceOnUse" patternTransform="translate(0,11.270)"><rect width="12" height="12.85" fill="#6293cf"/><path d="M6 12.85m0 -3.100l4.300 3.100l-4.300 3.100l-4.300 -3.100Z" fill="#4176b9"/><path d="M6 -3.100L10.300 0L6 3.100L1.700 0Z" fill="#4176b9"/><path d="M0.800 3.025L11.200 9.825M0.800 9.825L11.200 3.025" stroke="#f6f9fd" stroke-width="2.800" stroke-linecap="round"/></pattern><pattern id="wx" width="27.800" height="8" patternUnits="userSpaceOnUse" patternTransform="translate(3.200,13)"><path d="M0 2.500C5 2.500 8 6 13.900 6S22.800 2.500 27.800 2.500M0 1V5M27.800 1V5" fill="none" stroke="#8fa3bd" stroke-width="1.100"/></pattern><pattern id="wy" width="8" height="25.700" patternUnits="userSpaceOnUse" patternTransform="translate(13,5.300)"><path d="M2.500 0C2.500 4.600 6 7.400 6 12.850S2.500 21.100 2.500 25.700M1 0H5M1 25.700H5" fill="none" stroke="#8fa3bd" stroke-width="1.100"/></pattern><filter id="paper" x="0" y="0" width="100%" height="100%"><feTurbulence type="fractalNoise" baseFrequency="0.220" numOctaves="2" seed="3" result="n"/><feColorMatrix in="n" type="matrix" values="0 0 0 0 0.640  0 0 0 0 0.540  0 0 0 0 0.510  0.900 0 0 0 -0.330"/><feComposite in2="SourceGraphic" operator="in"/></filter></defs><rect x="0" y="0" width="368" height="12" fill="url(#px)"/><rect x="0" y="480" width="368" height="12" fill="url(#px)"/><rect x="0" y="12" width="12" height="468" fill="url(#py)"/><g transform="translate(356,0)"><rect x="0" y="12" width="12" height="468" fill="url(#py)"/></g><rect x="0" y="0" width="12" height="12" fill="#dfeaf8"/><path d="M3 3l6 6M9 3l-6 6" stroke="#6d9ad2" stroke-width="1.800"/><rect x="356" y="0" width="12" height="12" fill="#dfeaf8"/><path d="M359 3l6 6M365 3l-6 6" stroke="#6d9ad2" stroke-width="1.800"/><rect x="0" y="480" width="12" height="12" fill="#dfeaf8"/><path d="M3 483l6 6M9 483l-6 6" stroke="#6d9ad2" stroke-width="1.800"/><rect x="356" y="480" width="12" height="12" fill="#dfeaf8"/><path d="M359 483l6 6M365 483l-6 6" stroke="#6d9ad2" stroke-width="1.800"/><rect x="12.500" y="12.500" width="343" height="467" fill="none" stroke="#6c9bd6" stroke-width="1"/><rect x="17" y="13" width="334" height="8" fill="url(#wx)"/><g transform="translate(0,492) scale(1,-1)"><rect x="17" y="13" width="334" height="8" fill="url(#wx)"/></g><rect x="13" y="17" width="8" height="458" fill="url(#wy)"/><g transform="translate(368,0) scale(-1,1)"><rect x="13" y="17" width="8" height="458" fill="url(#wy)"/></g><rect x="22" y="21.500" width="324" height="449" fill="none" stroke="#5d89c4" stroke-width="1.100"/><rect x="24.500" y="23.800" width="319" height="444.4" fill="none" stroke="#7498c8" stroke-width="1"/><rect x="26" y="25" width="316" height="443.5" fill="#f4eeeb"/><rect x="26" y="25" width="316" height="443.5" fill="#fff" filter="url(#paper)" opacity=".62"/><rect x="334.500" y="25" width="6" height="443.5" fill="#f6eee6"/><rect x="340" y="25" width="3" height="443.5" fill="#d9e7f6"/></svg>
<svg class="a" style="left:156px;top:30px" width="58" height="62" viewBox="-29 -31 58 62"><ellipse cx="-3.3" cy="28.2" rx="4.800" ry="1.900" fill="#2e8b3a" transform="rotate(-196 -3.3 28.2)"/><ellipse cx="-2.9" cy="26.3" rx="4.300" ry="1.700" fill="#8fcf55" transform="rotate(-141 -2.9 26.3)"/><ellipse cx="-8.3" cy="26.7" rx="4.800" ry="1.900" fill="#7cc242" transform="rotate(-181 -8.3 26.7)"/><ellipse cx="-7.5" cy="24.9" rx="4.300" ry="1.700" fill="#2f8f45" transform="rotate(-126 -7.5 24.9)"/><ellipse cx="-13.0" cy="24.0" rx="4.800" ry="1.900" fill="#3f9e3f" transform="rotate(-168 -13.0 24.0)"/><ellipse cx="-11.7" cy="22.4" rx="4.300" ry="1.700" fill="#8fcf55" transform="rotate(-113 -11.7 22.4)"/><ellipse cx="-17.0" cy="20.2" rx="4.800" ry="1.900" fill="#a4d65e" transform="rotate(-155 -17.0 20.2)"/><ellipse cx="-15.3" cy="18.9" rx="4.300" ry="1.700" fill="#2f8f45" transform="rotate(-100 -15.3 18.9)"/><ellipse cx="-20.1" cy="15.4" rx="4.800" ry="1.900" fill="#2e8b3a" transform="rotate(-143 -20.1 15.4)"/><ellipse cx="-18.1" cy="14.5" rx="4.300" ry="1.700" fill="#8fcf55" transform="rotate(-88 -18.1 14.5)"/><ellipse cx="-22.3" cy="10.0" rx="4.800" ry="1.900" fill="#7cc242" transform="rotate(-131 -22.3 10.0)"/><ellipse cx="-20.1" cy="9.5" rx="4.300" ry="1.700" fill="#2f8f45" transform="rotate(-76 -20.1 9.5)"/><ellipse cx="-23.4" cy="4.1" rx="4.800" ry="1.900" fill="#3f9e3f" transform="rotate(-120 -23.4 4.1)"/><ellipse cx="-21.1" cy="4.1" rx="4.300" ry="1.700" fill="#8fcf55" transform="rotate(-65 -21.1 4.1)"/><ellipse cx="-23.3" cy="-1.9" rx="4.800" ry="1.900" fill="#a4d65e" transform="rotate(-109 -23.3 -1.9)"/><ellipse cx="-21.0" cy="-1.5" rx="4.300" ry="1.700" fill="#2f8f45" transform="rotate(-54 -21.0 -1.5)"/><ellipse cx="-22.1" cy="-7.7" rx="4.800" ry="1.900" fill="#2e8b3a" transform="rotate(-97 -22.1 -7.7)"/><ellipse cx="-19.9" cy="-6.8" rx="4.300" ry="1.700" fill="#8fcf55" transform="rotate(-42 -19.9 -6.8)"/><ellipse cx="-19.8" cy="-13.1" rx="4.800" ry="1.900" fill="#7cc242" transform="rotate(-86 -19.8 -13.1)"/><ellipse cx="-17.8" cy="-11.8" rx="4.300" ry="1.700" fill="#2f8f45" transform="rotate(-31 -17.8 -11.8)"/><ellipse cx="-16.5" cy="-17.8" rx="4.800" ry="1.900" fill="#3f9e3f" transform="rotate(-73 -16.5 -17.8)"/><ellipse cx="-14.8" cy="-16.0" rx="4.300" ry="1.700" fill="#8fcf55" transform="rotate(-18 -14.8 -16.0)"/><ellipse cx="-12.4" cy="-21.5" rx="4.800" ry="1.900" fill="#a4d65e" transform="rotate(-60 -12.4 -21.5)"/><ellipse cx="-11.1" cy="-19.4" rx="4.300" ry="1.700" fill="#2f8f45" transform="rotate(-5 -11.1 -19.4)"/><ellipse cx="-7.7" cy="-24.0" rx="4.800" ry="1.900" fill="#2e8b3a" transform="rotate(-47 -7.7 -24.0)"/><ellipse cx="-6.9" cy="-21.8" rx="4.300" ry="1.700" fill="#8fcf55" transform="rotate(8 -6.9 -21.8)"/><ellipse cx="3.3" cy="28.2" rx="4.800" ry="1.900" fill="#2e8b3a" transform="rotate(16 3.3 28.2)"/><ellipse cx="2.9" cy="26.3" rx="4.300" ry="1.700" fill="#8fcf55" transform="rotate(-39 2.9 26.3)"/><ellipse cx="8.3" cy="26.7" rx="4.800" ry="1.900" fill="#7cc242" transform="rotate(1 8.3 26.7)"/><ellipse cx="7.5" cy="24.9" rx="4.300" ry="1.700" fill="#2f8f45" transform="rotate(-54 7.5 24.9)"/><ellipse cx="13.0" cy="24.0" rx="4.800" ry="1.900" fill="#3f9e3f" transform="rotate(-12 13.0 24.0)"/><ellipse cx="11.7" cy="22.4" rx="4.300" ry="1.700" fill="#8fcf55" transform="rotate(-67 11.7 22.4)"/><ellipse cx="17.0" cy="20.2" rx="4.800" ry="1.900" fill="#a4d65e" transform="rotate(-25 17.0 20.2)"/><ellipse cx="15.3" cy="18.9" rx="4.300" ry="1.700" fill="#2f8f45" transform="rotate(-80 15.3 18.9)"/><ellipse cx="20.1" cy="15.4" rx="4.800" ry="1.900" fill="#2e8b3a" transform="rotate(-37 20.1 15.4)"/><ellipse cx="18.1" cy="14.5" rx="4.300" ry="1.700" fill="#8fcf55" transform="rotate(-92 18.1 14.5)"/><ellipse cx="22.3" cy="10.0" rx="4.800" ry="1.900" fill="#7cc242" transform="rotate(-49 22.3 10.0)"/><ellipse cx="20.1" cy="9.5" rx="4.300" ry="1.700" fill="#2f8f45" transform="rotate(-104 20.1 9.5)"/><ellipse cx="23.4" cy="4.1" rx="4.800" ry="1.900" fill="#3f9e3f" transform="rotate(-60 23.4 4.1)"/><ellipse cx="21.1" cy="4.1" rx="4.300" ry="1.700" fill="#8fcf55" transform="rotate(-115 21.1 4.1)"/><ellipse cx="23.3" cy="-1.9" rx="4.800" ry="1.900" fill="#a4d65e" transform="rotate(-71 23.3 -1.9)"/><ellipse cx="21.0" cy="-1.5" rx="4.300" ry="1.700" fill="#2f8f45" transform="rotate(-126 21.0 -1.5)"/><ellipse cx="22.1" cy="-7.7" rx="4.800" ry="1.900" fill="#2e8b3a" transform="rotate(-83 22.1 -7.7)"/><ellipse cx="19.9" cy="-6.8" rx="4.300" ry="1.700" fill="#8fcf55" transform="rotate(-138 19.9 -6.8)"/><ellipse cx="19.8" cy="-13.1" rx="4.800" ry="1.900" fill="#7cc242" transform="rotate(-94 19.8 -13.1)"/><ellipse cx="17.8" cy="-11.8" rx="4.300" ry="1.700" fill="#2f8f45" transform="rotate(-149 17.8 -11.8)"/><ellipse cx="16.5" cy="-17.8" rx="4.800" ry="1.900" fill="#3f9e3f" transform="rotate(-107 16.5 -17.8)"/><ellipse cx="14.8" cy="-16.0" rx="4.300" ry="1.700" fill="#8fcf55" transform="rotate(-162 14.8 -16.0)"/><ellipse cx="12.4" cy="-21.5" rx="4.800" ry="1.900" fill="#a4d65e" transform="rotate(-120 12.4 -21.5)"/><ellipse cx="11.1" cy="-19.4" rx="4.300" ry="1.700" fill="#2f8f45" transform="rotate(-175 11.1 -19.4)"/><ellipse cx="7.7" cy="-24.0" rx="4.800" ry="1.900" fill="#2e8b3a" transform="rotate(-133 7.7 -24.0)"/><ellipse cx="6.9" cy="-21.8" rx="4.300" ry="1.700" fill="#8fcf55" transform="rotate(-188 6.9 -21.8)"/><path d="M-5 27.500L0 25L5 27.500" stroke="#4aa84a" stroke-width="1.500" fill="none"/><polygon points="0.00,-24.60 0.88,-22.01 3.61,-21.97 1.43,-20.34 2.23,-17.73 0.00,-19.30 -2.23,-17.73 -1.43,-20.34 -3.61,-21.97 -0.88,-22.01" fill="#d9252b"/><path d="M-11.500 -14.500C-13.500 -5 -12 3 -9.500 9.500L-5.500 8C-8 1 -9.500 -6 -11.500 -14.500Z" fill="#6a9bd6"/><path d="M11.500 -14.500C13.500 -5 12 3 9.500 9.500L5.500 8C8 1 9.500 -6 11.500 -14.500Z" fill="#6a9bd6"/><path d="M-10.800 -12C-10 -5 -9 2 -7.500 8" stroke="#dbe8f6" stroke-width="1.300" fill="none"/><path d="M10.800 -12C10 -5 9 2 7.500 8" stroke="#dbe8f6" stroke-width="1.300" fill="none"/><path d="M0 -16L1.200 -11H0.600V20H-0.600V-11H-1.200Z" fill="#7a4a22"/><path d="M0 -16.500L1.300 -10H-1.300Z" fill="#7fa6d8"/><circle cx="0" cy="3.500" r="6.800" fill="#d39a3a"/><circle cx="-1.500" cy="2" r="4" fill="#dba84e" opacity=".7"/><path d="M-12.500 9.500C-10 8.500 -7 9.500 -4 11.500L-1 12.500V14.500L-5 14C-8 15 -11 14.500 -12.500 13Z" fill="#7a3f1c"/><path d="M12.500 9.500C10 8.500 7 9.500 4 11.500L1 12.500V14.500L5 14C8 15 11 14.500 12.500 13Z" fill="#7a3f1c"/></svg>
<div class="t" style="left:117px;top:95.1px;font-size:12.3px;line-height:14.8px;color:#1c1c1c;font-family:'Liberation Serif',serif;font-weight:bold;transform:scaleX(1.035);">DEATH CERTIFICATE</div>
<div class="t" style="left:111px;top:119.2px;font-size:8px;line-height:9.6px;color:#5c5c5c;font-family:'Liberation Serif',serif;transform:scaleX(1.057);">First/given name(s)</div><div class="t" style="left:189px;top:121px;font-size:5.4px;line-height:6.5px;color:#111;font-family:'Liberation Mono',monospace;font-weight:bold;transform:scaleX(1.234);">Rashid</div>
<div class="t" style="left:103px;top:131.2px;font-size:8px;line-height:9.6px;color:#5c5c5c;font-family:'Liberation Serif',serif;transform:scaleX(1.044);">Surname/family name</div><div class="t" style="left:189px;top:132.9px;font-size:5.4px;line-height:6.5px;color:#111;font-family:'Liberation Mono',monospace;font-weight:bold;transform:scaleX(1.234);">Mohamed</div>
<div class="t" style="left:130px;top:150.2px;font-size:8px;line-height:9.6px;color:#5c5c5c;font-family:'Liberation Serif',serif;transform:scaleX(1.091);">Date of death</div><div class="t" style="left:189px;top:151.9px;font-size:5.4px;line-height:6.5px;color:#111;font-family:'Liberation Mono',monospace;font-weight:bold;transform:scaleX(1.234);">30&#160;May&#160;2014</div>
<div class="t" style="left:128px;top:160.5px;font-size:8px;line-height:9.6px;color:#5c5c5c;font-family:'Liberation Serif',serif;transform:scaleX(1.081);">Place of death</div><div class="t" style="left:189px;top:162.2px;font-size:5.4px;line-height:6.5px;color:#111;font-family:'Liberation Mono',monospace;font-weight:bold;transform:scaleX(1.234);">Rangimarie&#160;Home&#160;David&#160;Street</div>
<div class="t" style="left:91.5px;top:171.2px;font-size:8px;line-height:9.6px;color:#5c5c5c;font-family:'Liberation Serif',serif;transform:scaleX(1.081);">Cause or causes of death</div><div class="t" style="left:189px;top:172.9px;font-size:5.4px;line-height:6.5px;color:#111;font-family:'Liberation Mono',monospace;font-weight:bold;transform:scaleX(1.234);">Senile&#160;Arteriosclerosis</div>
<div class="t" style="left:87.3px;top:191.8px;font-size:8px;line-height:9.6px;color:#5c5c5c;font-family:'Liberation Serif',serif;transform:scaleX(1.077);">Name of certifying doctor</div><div class="t" style="left:189px;top:193.6px;font-size:5.4px;line-height:6.5px;color:#111;font-family:'Liberation Mono',monospace;font-weight:bold;transform:scaleX(1.234);">L&#160;C&#160;McMickle</div>
<div class="t" style="left:41.5px;top:203.9px;font-size:8px;line-height:9.6px;color:#5c5c5c;font-family:'Liberation Serif',serif;transform:scaleX(1.063);">Date last seen alive by certifying doctor</div><div class="t" style="left:189px;top:205.7px;font-size:5.4px;line-height:6.5px;color:#111;font-family:'Liberation Mono',monospace;font-weight:bold;transform:scaleX(1.234);">27&#160;May&#160;2014</div>
<div class="t" style="left:164.4px;top:222.2px;font-size:8px;line-height:9.6px;color:#5c5c5c;font-family:'Liberation Serif',serif;transform:scaleX(1.050);">Sex</div><div class="t" style="left:189px;top:223.9px;font-size:5.4px;line-height:6.5px;color:#111;font-family:'Liberation Mono',monospace;font-weight:bold;transform:scaleX(1.234);">Male</div>
<div class="t" style="left:102.3px;top:233.2px;font-size:8px;line-height:9.6px;color:#5c5c5c;font-family:'Liberation Serif',serif;transform:scaleX(1.099);">Age and date of birth</div><div class="t" style="left:189px;top:234.9px;font-size:5.4px;line-height:6.5px;color:#111;font-family:'Liberation Mono',monospace;font-weight:bold;transform:scaleX(1.234);">71&#160;&#160;&#160;&#160;&#160;Not&#160;Recorded</div>
<div class="t" style="left:130px;top:245.2px;font-size:8px;line-height:9.6px;color:#5c5c5c;font-family:'Liberation Serif',serif;transform:scaleX(1.091);">Place of birth</div><div class="t" style="left:189px;top:246.9px;font-size:5.4px;line-height:6.5px;color:#111;font-family:'Liberation Mono',monospace;font-weight:bold;transform:scaleX(1.234);">Djibouti&#160;city</div>
<div class="t" style="left:107px;top:255.5px;font-size:8px;line-height:9.6px;color:#5c5c5c;font-family:'Liberation Serif',serif;transform:scaleX(1.086);">Usual home address</div><div class="t" style="left:189px;top:257.2px;font-size:5.4px;line-height:6.5px;color:#111;font-family:'Liberation Mono',monospace;font-weight:bold;transform:scaleX(1.234);">Not&#160;Recorded</div>
<div class="t" style="left:55px;top:274.2px;font-size:8px;line-height:9.6px;color:#5c5c5c;font-family:'Liberation Serif',serif;transform:scaleX(1.070);">Usual occupation, profession or job</div><div class="t" style="left:189px;top:275.9px;font-size:5.4px;line-height:6.5px;color:#111;font-family:'Liberation Mono',monospace;font-weight:bold;transform:scaleX(1.234);">Retired&#160;Farmer</div>
<div class="t" style="left:82px;top:285.9px;font-size:8px;line-height:9.6px;color:#5c5c5c;font-family:'Liberation Serif',serif;transform:scaleX(1.091);">Date of burial or cremation</div><div class="t" style="left:189px;top:287.6px;font-size:5.4px;line-height:6.5px;color:#111;font-family:'Liberation Mono',monospace;font-weight:bold;transform:scaleX(1.234);">31&#160;May&#160;2014</div>
<div class="t" style="left:80px;top:296.8px;font-size:8px;line-height:9.6px;color:#5c5c5c;font-family:'Liberation Serif',serif;transform:scaleX(1.086);">Place of burial or cremation</div><div class="t" style="left:189px;top:298.6px;font-size:5.4px;line-height:6.5px;color:#111;font-family:'Liberation Mono',monospace;font-weight:bold;transform:scaleX(1.234);">Ropuatana&#160;Cemetery</div>
<div class="t" style="left:111px;top:315.5px;font-size:8px;line-height:9.6px;color:#5c5c5c;font-family:'Liberation Serif',serif;transform:scaleX(1.057);">First/given name(s)</div><div class="t" style="left:189px;top:317.2px;font-size:5.4px;line-height:6.5px;color:#111;font-family:'Liberation Mono',monospace;font-weight:bold;transform:scaleX(1.234);">Sarah</div>
<div class="t" style="left:103px;top:328px;font-size:8px;line-height:9.6px;color:#5c5c5c;font-family:'Liberation Serif',serif;transform:scaleX(1.044);">Surname/family name</div><div class="t" style="left:189px;top:329.8px;font-size:5.4px;line-height:6.5px;color:#111;font-family:'Liberation Mono',monospace;font-weight:bold;transform:scaleX(1.234);">Masler</div>
<div class="t" style="left:111px;top:350.5px;font-size:8px;line-height:9.6px;color:#5c5c5c;font-family:'Liberation Serif',serif;transform:scaleX(1.057);">First/given name(s)</div><div class="t" style="left:189px;top:352.2px;font-size:5.4px;line-height:6.5px;color:#111;font-family:'Liberation Mono',monospace;font-weight:bold;transform:scaleX(1.234);">George</div>
<div class="t" style="left:103px;top:362.6px;font-size:8px;line-height:9.6px;color:#5c5c5c;font-family:'Liberation Serif',serif;transform:scaleX(1.044);">Surname/family name</div><div class="t" style="left:189px;top:364.4px;font-size:5.4px;line-height:6.5px;color:#111;font-family:'Liberation Mono',monospace;font-weight:bold;transform:scaleX(1.234);">Masler</div>
<div class="t" style="left:55px;top:381.8px;font-size:8px;line-height:9.6px;color:#5c5c5c;font-family:'Liberation Serif',serif;transform:scaleX(1.083);">Relationship status at time of death</div><div class="t" style="left:189px;top:383.6px;font-size:5.4px;line-height:6.5px;color:#111;font-family:'Liberation Mono',monospace;font-weight:bold;transform:scaleX(1.234);">Not&#160;Recorded</div>
<div class="t" style="left:60px;top:316.5px;font-size:6.9px;line-height:8.3px;color:#3a3a3a;font-family:'Liberation Serif',serif;transform:scaleX(1.014);">MOTHER:</div>
<div class="t" style="left:61px;top:351.5px;font-size:6.9px;line-height:8.3px;color:#3a3a3a;font-family:'Liberation Serif',serif;transform:scaleX(1.055);">FATHER:</div>
<svg class="a" style="left:60px;top:382px" width="98" height="98" viewBox="-49 -49 98 98" opacity=".9"><circle r="43.300" fill="none" stroke="#7252b0" stroke-width="1.300"/><circle r="41" fill="none" stroke="#7252b0" stroke-width=".7"/><circle r="25.300" fill="none" stroke="#7252b0" stroke-width="1.100"/><circle r="23.300" fill="none" stroke="#7252b0" stroke-width=".6"/><text x="0" y="0" text-anchor="middle" transform="translate(-28.03,-20.12) rotate(-54.3)" font-family="Liberation Sans,sans-serif" font-weight="bold" font-size="6.6" fill="#7252b0">D</text><text x="0" y="0" text-anchor="middle" transform="translate(-25.02,-23.75) rotate(-46.5)" font-family="Liberation Sans,sans-serif" font-weight="bold" font-size="6.6" fill="#7252b0">J</text><text x="0" y="0" text-anchor="middle" transform="translate(-22.68,-26.00) rotate(-41.1)" font-family="Liberation Sans,sans-serif" font-weight="bold" font-size="6.6" fill="#7252b0">I</text><text x="0" y="0" text-anchor="middle" transform="translate(-19.68,-28.33) rotate(-34.8)" font-family="Liberation Sans,sans-serif" font-weight="bold" font-size="6.6" fill="#7252b0">B</text><text x="0" y="0" text-anchor="middle" transform="translate(-14.98,-31.08) rotate(-25.7)" font-family="Liberation Sans,sans-serif" font-weight="bold" font-size="6.6" fill="#7252b0">O</text><text x="0" y="0" text-anchor="middle" transform="translate(-9.90,-33.05) rotate(-16.7)" font-family="Liberation Sans,sans-serif" font-weight="bold" font-size="6.6" fill="#7252b0">U</text><text x="0" y="0" text-anchor="middle" transform="translate(-5.13,-34.12) rotate(-8.5)" font-family="Liberation Sans,sans-serif" font-weight="bold" font-size="6.6" fill="#7252b0">T</text><text x="0" y="0" text-anchor="middle" transform="translate(-1.71,-34.46) rotate(-2.8)" font-family="Liberation Sans,sans-serif" font-weight="bold" font-size="6.6" fill="#7252b0">I</text><text x="0" y="0" text-anchor="middle" transform="translate(4.41,-34.22) rotate(7.3)" font-family="Liberation Sans,sans-serif" font-weight="bold" font-size="6.6" fill="#7252b0">C</text><text x="0" y="0" text-anchor="middle" transform="translate(9.73,-33.10) rotate(16.4)" font-family="Liberation Sans,sans-serif" font-weight="bold" font-size="6.6" fill="#7252b0">O</text><text x="0" y="0" text-anchor="middle" transform="translate(14.82,-31.15) rotate(25.4)" font-family="Liberation Sans,sans-serif" font-weight="bold" font-size="6.6" fill="#7252b0">U</text><text x="0" y="0" text-anchor="middle" transform="translate(19.39,-28.54) rotate(34.2)" font-family="Liberation Sans,sans-serif" font-weight="bold" font-size="6.6" fill="#7252b0">N</text><text x="0" y="0" text-anchor="middle" transform="translate(23.50,-25.26) rotate(42.9)" font-family="Liberation Sans,sans-serif" font-weight="bold" font-size="6.6" fill="#7252b0">C</text><text x="0" y="0" text-anchor="middle" transform="translate(26.13,-22.52) rotate(49.2)" font-family="Liberation Sans,sans-serif" font-weight="bold" font-size="6.6" fill="#7252b0">I</text><text x="0" y="0" text-anchor="middle" transform="translate(28.24,-19.82) rotate(54.9)" font-family="Liberation Sans,sans-serif" font-weight="bold" font-size="6.6" fill="#7252b0">L</text><text x="0" y="0" text-anchor="middle" transform="translate(-27.62,-3.12) rotate(-83.6)" font-family="Liberation Sans,sans-serif" font-weight="bold" font-size="5.1" fill="#7252b0">D</text><text x="0" y="0" text-anchor="middle" transform="translate(-26.98,-6.70) rotate(-76.1)" font-family="Liberation Sans,sans-serif" font-weight="bold" font-size="5.1" fill="#7252b0">E</text><text x="0" y="0" text-anchor="middle" transform="translate(-25.93,-10.04) rotate(-68.8)" font-family="Liberation Sans,sans-serif" font-weight="bold" font-size="5.1" fill="#7252b0">P</text><text x="0" y="0" text-anchor="middle" transform="translate(-24.39,-13.34) rotate(-61.3)" font-family="Liberation Sans,sans-serif" font-weight="bold" font-size="5.1" fill="#7252b0">A</text><text x="0" y="0" text-anchor="middle" transform="translate(-22.36,-16.52) rotate(-53.5)" font-family="Liberation Sans,sans-serif" font-weight="bold" font-size="5.1" fill="#7252b0">R</text><text x="0" y="0" text-anchor="middle" transform="translate(-20.11,-19.20) rotate(-46.3)" font-family="Liberation Sans,sans-serif" font-weight="bold" font-size="5.1" fill="#7252b0">T</text><text x="0" y="0" text-anchor="middle" transform="translate(-17.32,-21.75) rotate(-38.5)" font-family="Liberation Sans,sans-serif" font-weight="bold" font-size="5.1" fill="#7252b0">M</text><text x="0" y="0" text-anchor="middle" transform="translate(-14.08,-23.97) rotate(-30.4)" font-family="Liberation Sans,sans-serif" font-weight="bold" font-size="5.1" fill="#7252b0">E</text><text x="0" y="0" text-anchor="middle" transform="translate(-10.83,-25.60) rotate(-22.9)" font-family="Liberation Sans,sans-serif" font-weight="bold" font-size="5.1" fill="#7252b0">N</text><text x="0" y="0" text-anchor="middle" transform="translate(-7.53,-26.76) rotate(-15.7)" font-family="Liberation Sans,sans-serif" font-weight="bold" font-size="5.1" fill="#7252b0">T</text><text x="0" y="0" text-anchor="middle" transform="translate(-2.47,-27.69) rotate(-5.1)" font-family="Liberation Sans,sans-serif" font-weight="bold" font-size="5.1" fill="#7252b0">O</text><text x="0" y="0" text-anchor="middle" transform="translate(1.17,-27.78) rotate(2.4)" font-family="Liberation Sans,sans-serif" font-weight="bold" font-size="5.1" fill="#7252b0">F</text><text x="0" y="0" text-anchor="middle" transform="translate(6.14,-27.11) rotate(12.8)" font-family="Liberation Sans,sans-serif" font-weight="bold" font-size="5.1" fill="#7252b0">D</text><text x="0" y="0" text-anchor="middle" transform="translate(9.36,-26.18) rotate(19.7)" font-family="Liberation Sans,sans-serif" font-weight="bold" font-size="5.1" fill="#7252b0">J</text><text x="0" y="0" text-anchor="middle" transform="translate(11.43,-25.34) rotate(24.3)" font-family="Liberation Sans,sans-serif" font-weight="bold" font-size="5.1" fill="#7252b0">I</text><text x="0" y="0" text-anchor="middle" transform="translate(13.79,-24.14) rotate(29.7)" font-family="Liberation Sans,sans-serif" font-weight="bold" font-size="5.1" fill="#7252b0">B</text><text x="0" y="0" text-anchor="middle" transform="translate(17.05,-21.96) rotate(37.8)" font-family="Liberation Sans,sans-serif" font-weight="bold" font-size="5.1" fill="#7252b0">O</text><text x="0" y="0" text-anchor="middle" transform="translate(19.97,-19.34) rotate(45.9)" font-family="Liberation Sans,sans-serif" font-weight="bold" font-size="5.1" fill="#7252b0">U</text><text x="0" y="0" text-anchor="middle" transform="translate(22.24,-16.68) rotate(53.1)" font-family="Liberation Sans,sans-serif" font-weight="bold" font-size="5.1" fill="#7252b0">T</text><text x="0" y="0" text-anchor="middle" transform="translate(23.58,-14.73) rotate(58.0)" font-family="Liberation Sans,sans-serif" font-weight="bold" font-size="5.1" fill="#7252b0">I</text><text x="0" y="0" text-anchor="middle" transform="translate(25.51,-11.05) rotate(66.6)" font-family="Liberation Sans,sans-serif" font-weight="bold" font-size="5.1" fill="#7252b0">C</text><text x="0" y="0" text-anchor="middle" transform="translate(26.45,-8.57) rotate(72.1)" font-family="Liberation Sans,sans-serif" font-weight="bold" font-size="5.1" fill="#7252b0">I</text><text x="0" y="0" text-anchor="middle" transform="translate(27.08,-6.29) rotate(76.9)" font-family="Liberation Sans,sans-serif" font-weight="bold" font-size="5.1" fill="#7252b0">T</text><text x="0" y="0" text-anchor="middle" transform="translate(27.64,-2.98) rotate(83.8)" font-family="Liberation Sans,sans-serif" font-weight="bold" font-size="5.1" fill="#7252b0">Y</text><text x="0" y="0" text-anchor="middle" transform="translate(-23.90,28.89) rotate(39.6)" font-family="Liberation Sans,sans-serif" font-weight="bold" font-size="5" fill="#7252b0">D</text><text x="0" y="0" text-anchor="middle" transform="translate(-21.03,31.05) rotate(34.1)" font-family="Liberation Sans,sans-serif" font-weight="bold" font-size="5" fill="#7252b0">J</text><text x="0" y="0" text-anchor="middle" transform="translate(-18.92,32.37) rotate(30.3)" font-family="Liberation Sans,sans-serif" font-weight="bold" font-size="5" fill="#7252b0">I</text><text x="0" y="0" text-anchor="middle" transform="translate(-16.37,33.74) rotate(25.9)" font-family="Liberation Sans,sans-serif" font-weight="bold" font-size="5" fill="#7252b0">B</text><text x="0" y="0" text-anchor="middle" transform="translate(-12.54,35.34) rotate(19.5)" font-family="Liberation Sans,sans-serif" font-weight="bold" font-size="5" fill="#7252b0">O</text><text x="0" y="0" text-anchor="middle" transform="translate(-8.56,36.51) rotate(13.2)" font-family="Liberation Sans,sans-serif" font-weight="bold" font-size="5" fill="#7252b0">U</text><text x="0" y="0" text-anchor="middle" transform="translate(-4.89,37.18) rotate(7.5)" font-family="Liberation Sans,sans-serif" font-weight="bold" font-size="5" fill="#7252b0">T</text><text x="0" y="0" text-anchor="middle" transform="translate(-2.28,37.43) rotate(3.5)" font-family="Liberation Sans,sans-serif" font-weight="bold" font-size="5" fill="#7252b0">I</text><text x="0" y="0" text-anchor="middle" transform="translate(2.40,37.42) rotate(-3.7)" font-family="Liberation Sans,sans-serif" font-weight="bold" font-size="5" fill="#7252b0">C</text><text x="0" y="0" text-anchor="middle" transform="translate(6.52,36.93) rotate(-10.0)" font-family="Liberation Sans,sans-serif" font-weight="bold" font-size="5" fill="#7252b0">O</text><text x="0" y="0" text-anchor="middle" transform="translate(10.56,35.98) rotate(-16.4)" font-family="Liberation Sans,sans-serif" font-weight="bold" font-size="5" fill="#7252b0">U</text><text x="0" y="0" text-anchor="middle" transform="translate(14.34,34.65) rotate(-22.5)" font-family="Liberation Sans,sans-serif" font-weight="bold" font-size="5" fill="#7252b0">N</text><text x="0" y="0" text-anchor="middle" transform="translate(17.71,33.05) rotate(-28.2)" font-family="Liberation Sans,sans-serif" font-weight="bold" font-size="5" fill="#7252b0">T</text><text x="0" y="0" text-anchor="middle" transform="translate(20.91,31.13) rotate(-33.9)" font-family="Liberation Sans,sans-serif" font-weight="bold" font-size="5" fill="#7252b0">R</text><text x="0" y="0" text-anchor="middle" transform="translate(24.01,28.81) rotate(-39.8)" font-family="Liberation Sans,sans-serif" font-weight="bold" font-size="5" fill="#7252b0">Y</text><circle cx="-32" cy="14" r="1.300" fill="#7252b0"/><circle cx="32" cy="14" r="1.300" fill="#7252b0"/><ellipse cx="-4.5" cy="17.9" rx="3.600" ry="1.400" fill="#7252b0" transform="rotate(-193 -4.5 17.9)"/><ellipse cx="-3.9" cy="15.8" rx="3" ry="1.100" fill="#7252b0" transform="rotate(-137 -3.9 15.8)"/><ellipse cx="-9.7" cy="15.6" rx="3.600" ry="1.400" fill="#7252b0" transform="rotate(-174 -9.7 15.6)"/><ellipse cx="-8.4" cy="13.7" rx="3" ry="1.100" fill="#7252b0" transform="rotate(-118 -8.4 13.7)"/><ellipse cx="-13.9" cy="11.7" rx="3.600" ry="1.400" fill="#7252b0" transform="rotate(-156 -13.9 11.7)"/><ellipse cx="-11.9" cy="10.3" rx="3" ry="1.100" fill="#7252b0" transform="rotate(-100 -11.9 10.3)"/><ellipse cx="-16.6" cy="6.6" rx="3.600" ry="1.400" fill="#7252b0" transform="rotate(-137 -16.6 6.6)"/><ellipse cx="-14.3" cy="5.8" rx="3" ry="1.100" fill="#7252b0" transform="rotate(-81 -14.3 5.8)"/><ellipse cx="-17.5" cy="1.0" rx="3.600" ry="1.400" fill="#7252b0" transform="rotate(-118 -17.5 1.0)"/><ellipse cx="-15.0" cy="0.9" rx="3" ry="1.100" fill="#7252b0" transform="rotate(-62 -15.0 0.9)"/><ellipse cx="-16.6" cy="-4.6" rx="3.600" ry="1.400" fill="#7252b0" transform="rotate(-99 -16.6 -4.6)"/><ellipse cx="-14.3" cy="-4.1" rx="3" ry="1.100" fill="#7252b0" transform="rotate(-43 -14.3 -4.1)"/><ellipse cx="-13.9" cy="-9.7" rx="3.600" ry="1.400" fill="#7252b0" transform="rotate(-80 -13.9 -9.7)"/><ellipse cx="-11.9" cy="-8.5" rx="3" ry="1.100" fill="#7252b0" transform="rotate(-25 -11.9 -8.5)"/><ellipse cx="-9.7" cy="-13.6" rx="3.600" ry="1.400" fill="#7252b0" transform="rotate(-62 -9.7 -13.6)"/><ellipse cx="-8.4" cy="-11.9" rx="3" ry="1.100" fill="#7252b0" transform="rotate(-6 -8.4 -11.9)"/><ellipse cx="-4.5" cy="-15.9" rx="3.600" ry="1.400" fill="#7252b0" transform="rotate(-43 -4.5 -15.9)"/><ellipse cx="-3.9" cy="-14.0" rx="3" ry="1.100" fill="#7252b0" transform="rotate(13 -3.9 -14.0)"/><ellipse cx="4.5" cy="17.9" rx="3.600" ry="1.400" fill="#7252b0" transform="rotate(13 4.5 17.9)"/><ellipse cx="3.9" cy="15.8" rx="3" ry="1.100" fill="#7252b0" transform="rotate(-43 3.9 15.8)"/><ellipse cx="9.7" cy="15.6" rx="3.600" ry="1.400" fill="#7252b0" transform="rotate(-6 9.7 15.6)"/><ellipse cx="8.4" cy="13.7" rx="3" ry="1.100" fill="#7252b0" transform="rotate(-62 8.4 13.7)"/><ellipse cx="13.9" cy="11.7" rx="3.600" ry="1.400" fill="#7252b0" transform="rotate(-25 13.9 11.7)"/><ellipse cx="11.9" cy="10.3" rx="3" ry="1.100" fill="#7252b0" transform="rotate(-80 11.9 10.3)"/><ellipse cx="16.6" cy="6.6" rx="3.600" ry="1.400" fill="#7252b0" transform="rotate(-43 16.6 6.6)"/><ellipse cx="14.3" cy="5.8" rx="3" ry="1.100" fill="#7252b0" transform="rotate(-99 14.3 5.8)"/><ellipse cx="17.5" cy="1.0" rx="3.600" ry="1.400" fill="#7252b0" transform="rotate(-62 17.5 1.0)"/><ellipse cx="15.0" cy="0.9" rx="3" ry="1.100" fill="#7252b0" transform="rotate(-118 15.0 0.9)"/><ellipse cx="16.6" cy="-4.6" rx="3.600" ry="1.400" fill="#7252b0" transform="rotate(-81 16.6 -4.6)"/><ellipse cx="14.3" cy="-4.1" rx="3" ry="1.100" fill="#7252b0" transform="rotate(-137 14.3 -4.1)"/><ellipse cx="13.9" cy="-9.7" rx="3.600" ry="1.400" fill="#7252b0" transform="rotate(-100 13.9 -9.7)"/><ellipse cx="11.9" cy="-8.5" rx="3" ry="1.100" fill="#7252b0" transform="rotate(-156 11.9 -8.5)"/><ellipse cx="9.7" cy="-13.6" rx="3.600" ry="1.400" fill="#7252b0" transform="rotate(-118 9.7 -13.6)"/><ellipse cx="8.4" cy="-11.9" rx="3" ry="1.100" fill="#7252b0" transform="rotate(-174 8.4 -11.9)"/><ellipse cx="4.5" cy="-15.9" rx="3.600" ry="1.400" fill="#7252b0" transform="rotate(-137 4.5 -15.9)"/><ellipse cx="3.9" cy="-14.0" rx="3" ry="1.100" fill="#7252b0" transform="rotate(-193 3.9 -14.0)"/><polygon points="0.00,-17.70 0.53,-16.23 2.09,-16.18 0.86,-15.22 1.29,-13.72 0.00,-14.60 -1.29,-13.72 -0.86,-15.22 -2.09,-16.18 -0.53,-16.23" fill="#7252b0"/><path d="M-6.500 -10C-7.500 -3 -7 3 -5.500 8L-3.500 7C-5 2 -5.500 -4 -6.500 -10ZM6.500 -10C7.500 -3 7 3 5.500 8L3.500 7C5 2 5.500 -4 6.500 -10Z" fill="#9a85cc"/><path d="M0 -12L1 -8H0.500V13H-0.500V-8H-1Z" fill="#7252b0"/><circle cx="0" cy="1.500" r="4.200" fill="#b3a3dc"/><path d="M-8 6.500C-5 6 -2 8 0 9C2 8 5 6 8 6.500L7.500 9.500C4 9 2 10 0 11C-2 10 -4 9 -7.500 9.500Z" fill="#7252b0"/></svg>
<svg class="a" style="left:204px;top:408px" width="104" height="46" viewBox="560 522 104 46"><path d="M564 548.300H656.700" stroke="#8b8f9e" stroke-width=".9"/><g fill="none" stroke="#7b89c6" stroke-width="1.150" stroke-linecap="round" stroke-linejoin="round"><path d="M581 537C584 533.500 589 532.500 592.500 534C589 533 586.500 534 586 536C585 541 582.500 548 579 551C577.500 552.300 575.500 551.500 576 549.500C576.800 547 581 545.500 585 545"/><circle cx="591" cy="546.500" r=".5" fill="#7b89c6"/><path d="M612 536C613.500 532.500 610.500 531.500 607.500 534C603 537.500 600 543.500 602 546.500C604 549 609 546.500 612.500 543"/><path d="M613 543C614.500 541.500 615.500 540.500 616 541C615 543 614 546 615.500 546.500C617.500 546.500 620 542 622.500 538C625.500 533 629 529.500 630.500 530C628 533.500 623 541 620.500 546.500C622 545 624 543.500 625 543"/><path d="M616 538.800H632"/><path d="M625 543C627 541.500 629 541.500 629.500 542.500C628 544.500 625.500 546.500 624 548C626.500 548 627.500 551 626 555C624.500 559.500 620 562 618 560C616.500 558 620 553 626 549.500C629 548 631 546.500 632.500 545"/><path d="M632.500 545C634.500 544.500 636 543 635.500 542C634.500 541.300 632.500 543 632.500 545C633 547 636 546 638.500 543.500C639.500 542.500 640.500 542 640.500 542.500C640 544 639 546 639 546.500C640.500 544.500 643 541.800 644.500 542.300C645.500 543 644 545.500 644.500 546.500C645.500 547.500 647.500 546 648.500 544.800"/></g></svg>
<div class="t" style="left:215.7px;top:438.1px;font-size:6.5px;line-height:7.8px;color:#2a2a2a;font-family:'Liberation Serif',serif;font-weight:bold;font-style:italic;transform:scaleX(1.058);">District/Assistant Registrar</div>
</div>

</div>
<div id="status" class="a">
<div class="t" style="left:6px;top:2px;font-size:7.500px;color:#e0e0e0">20.66%</div>
<div class="t" style="left:47px;top:2px;font-size:7.500px;color:#e0e0e0">2232 px x 2854 px (250 ppi)</div>
<div class="t" style="left:140px;top:1px;font-size:8px;color:#bbb">&#8250;</div>
</div>

<!-- right column: collapse arrows -->
<svg class="a" style="left:885.500px;top:42.500px" width="6" height="5" viewBox="0 0 6 5"><path d="M2.300 0.500L0.500 2.500L2.300 4.500M5.100 0.500L3.300 2.500L5.100 4.500" stroke="#c4c4c4" stroke-width=".9" fill="none"/></svg>
<svg class="a" style="left:1065.500px;top:42.500px" width="6" height="5" viewBox="0 0 6 5"><path d="M0.500 0.500L2.300 2.500L0.500 4.500M3.300 0.500L5.100 2.500L3.300 4.500" stroke="#c4c4c4" stroke-width=".9" fill="none"/></svg>
<!-- icon strip icons -->
<div class="hl" style="left:870px;top:95px;width:25px;background:#444"></div>
<div class="hl" style="left:870px;top:143px;width:25px;background:#444"></div>
<div class="hl" style="left:870px;top:172px;width:25px;background:#444"></div>
<div class="hl" style="left:870px;top:201px;width:25px;background:#444"></div>
<div class="a" style="left:868.500px;top:49px;width:1.500px;height:671px;background:#414141"></div>
<div class="a" style="left:895px;top:49px;width:1px;height:671px;background:#414141"></div>
<svg class="a" style="left:870px;top:49px" width="25" height="160" viewBox="0 0 25 160">
<g fill="#d8d8d8" stroke="none">
<path d="M18 7.500L19 8.500L12.500 16.500L10.500 14.500Z"/><path d="M10 15.500L11.800 17.300C11 19 9 19.500 7.500 19C8.500 18 8.500 16.500 10 15.500Z"/>
<rect x="6" y="9" width="4.500" height="1"/><rect x="6" y="11" width="3.500" height="1"/><rect x="6" y="13" width="2.500" height="1"/>
<rect x="6.500" y="30.500" width="12" height="1.300"/><rect x="6.500" y="36.500" width="12" height="1.300"/><rect x="8" y="28.700" width="3.500" height="5" rx=".5"/><path d="M14.500 34.500H18.500L17.500 40H15.500Z"/>
<g transform="translate(2.500,11) scale(.8)"><path d="M6 72.500L10 61.500H11.500L15.500 72.500H14L13 69.500H8.500L7.500 72.500ZM9 68.300H12.500L10.750 63.300Z"/><rect x="17.500" y="60" width="1.100" height="14.500"/></g>
<path transform="translate(-1,-5)" d="M13.500 82H18.500V83.300H17.500V94.500H16.200V83.300H14.800V94.500H13.500V88.500A3.300 3.300 0 0 1 13.500 82Z"/>
</g>
<text x="6" y="119" font-family="Liberation Serif,serif" font-style="italic" font-weight="bold" font-size="16" fill="#d8d8d8">A</text>
<g transform="translate(2.500,31) scale(.8)" fill="none" stroke="#bdbdbd" stroke-width="1.300"><path d="M12.500 131L18 134V141L12.500 144L7 141V134Z"/><path d="M7 134L12.500 137L18 134M12.500 137V144"/></g>
</svg>
<!-- PROPERTIES PANEL -->
<div id="props" class="a"></div>
<div class="a" style="left:896px;top:49px;width:184px;height:20px;background:#424242"></div>
<div class="a" style="left:1009.500px;top:49px;width:41px;height:21px;background:#535353"></div>
<div class="t" style="left:901.5px;top:53.7px;font-size:8px;line-height:9.6px;color:#b4b4b4;transform:scaleX(0.780);">Swatc</div>
<div class="t" style="left:924px;top:53.7px;font-size:8px;line-height:9.6px;color:#b4b4b4;transform:scaleX(0.869);">Gradi</div>
<div class="t" style="left:946.5px;top:53.7px;font-size:8px;line-height:9.6px;color:#b4b4b4;transform:scaleX(0.820);">Patter</div>
<div class="t" style="left:968.5px;top:53.7px;font-size:8px;line-height:9.6px;color:#b4b4b4;transform:scaleX(0.862);">Histor</div>
<div class="t" style="left:991.5px;top:53.7px;font-size:8px;line-height:9.6px;color:#b4b4b4;transform:scaleX(0.765);">Action</div>
<div class="t" style="left:1014px;top:53.7px;font-size:8px;line-height:9.6px;color:#f0f0f0;font-weight:bold;transform:scaleX(0.796);">Properties</div>
<div class="a" style="left:1065px;top:55px;width:7px;height:1px;background:#c8c8c8;box-shadow:0 2.500px 0 #c8c8c8,0 5px 0 #c8c8c8"></div>
<div class="sel" style="left:903px;top:73px;width:13.500px;height:15px"></div>
<svg class="a" style="left:905.500px;top:75.500px" width="9" height="10" viewBox="0 0 9 10"><path d="M0.600 0.600H5.500L8.400 3.500V9.400H0.600Z" fill="none" stroke="#e0e0e0" stroke-width="1.100"/><path d="M5.500 0.600V3.500H8.400" fill="none" stroke="#e0e0e0" stroke-width=".9"/></svg>
<div class="t" style="left:920.5px;top:77.5px;font-size:7.5px;line-height:9px;color:#d8d8d8;transform:scaleX(0.834);">Document</div>
<div class="hl" style="left:896px;top:93px;width:170px;background:#454545"></div>
<!-- scrollbar -->
<div class="a" style="left:1066px;top:94px;width:8px;height:273px;background:#484848"></div>
<div class="a" style="left:1066.500px;top:105px;width:7px;height:221px;background:#6a6a6a;border-radius:1px"></div>
<svg class="a" style="left:1067px;top:97px" width="6" height="4" viewBox="0 0 6 4"><path d="M0.500 3.500L3 1L5.500 3.500" stroke="#999" fill="none"/></svg>
<svg class="a" style="left:1067px;top:359px" width="6" height="4" viewBox="0 0 6 4"><path d="M0.500 0.500L3 3L5.500 0.500" stroke="#999" fill="none"/></svg>
<!-- Canvas section -->
<svg class="a" style="left:900.500px;top:100.500px" width="6" height="4" viewBox="0 0 6 4"><path d="M0.500 0.500L3 3L5.500 0.500" stroke="#9a9a9a" fill="none"/></svg>
<div class="t" style="left:910px;top:97.7px;font-size:8px;line-height:9.6px;color:#ececec;font-weight:bold;transform:scaleX(0.808);">Canvas</div>
<div class="t" style="left:929px;top:115.5px;font-size:7.5px;line-height:9px;color:#d0d0d0;transform:scaleX(0.848);">W</div>
<div class="inp" style="left:938.500px;top:115px;width:31.500px;height:10px"></div>
<div class="t" style="left:941px;top:115.5px;font-size:7.5px;line-height:9px;color:#e4e4e4;transform:scaleX(0.899);">2232 px</div>
<div class="t" style="left:981px;top:115.5px;font-size:7.5px;line-height:9px;color:#bdbdbd;transform:scaleX(0.900);">X</div>
<div class="inp" style="left:991px;top:115px;width:29.500px;height:10px;background:#4c4c4c"></div>
<div class="t" style="left:993.5px;top:115.8px;font-size:7px;line-height:8.4px;color:#6a6a6a;transform:scaleX(0.831);">0 px</div>
<div class="t" style="left:930px;top:133px;font-size:7.5px;line-height:9px;color:#d0d0d0;transform:scaleX(0.923);">H</div>
<div class="inp" style="left:938.500px;top:132.500px;width:31.500px;height:10px"></div>
<div class="t" style="left:941px;top:133px;font-size:7.5px;line-height:9px;color:#e4e4e4;transform:scaleX(0.899);">2854 px</div>
<div class="t" style="left:981px;top:133px;font-size:7.5px;line-height:9px;color:#bdbdbd;transform:scaleX(0.900);">Y</div>
<div class="inp" style="left:991px;top:132.500px;width:29.500px;height:10px;background:#4c4c4c"></div>
<div class="t" style="left:993.5px;top:133.3px;font-size:7px;line-height:8.4px;color:#6a6a6a;transform:scaleX(0.831);">0 px</div>
<svg class="a" style="left:907px;top:122px" width="6" height="12" viewBox="0 0 6 12"><rect x="1" y="0.600" width="4" height="4.600" rx="2" fill="none" stroke="#cfcfcf" stroke-width="1.100"/><rect x="1" y="6.800" width="4" height="4.600" rx="2" fill="none" stroke="#cfcfcf" stroke-width="1.100"/><path d="M3 3.500V8.500" stroke="#cfcfcf" stroke-width="1.100"/></svg>
<div class="sel" style="left:939px;top:152px;width:14.500px;height:15px;background:#383838"></div>
<svg class="a" style="left:942px;top:154px" width="9" height="11" viewBox="0 0 9 11"><rect x="0.500" y="0.500" width="8" height="10" fill="none" stroke="#e8e8e8"/><circle cx="4.500" cy="3.800" r="1.400" fill="#e8e8e8"/><path d="M2 10V7.500A2.500 2 0 0 1 7 7.500V10Z" fill="#e8e8e8"/></svg>
<svg class="a" style="left:957px;top:155px" width="11" height="9" viewBox="0 0 11 9"><rect x="0.500" y="0.500" width="10" height="8" fill="none" stroke="#dcdcdc"/><circle cx="5.500" cy="3.300" r="1.300" fill="#dcdcdc"/><path d="M3 8V6.800A2.500 1.800 0 0 1 8 6.800V8Z" fill="#dcdcdc"/></svg>
<div class="t" style="left:938.5px;top:175px;font-size:7.5px;line-height:9px;color:#d8d8d8;transform:scaleX(0.824);">Resolution: 250 pixels/inch</div>
<div class="t" style="left:919px;top:193px;font-size:7.5px;line-height:9px;color:#d0d0d0;transform:scaleX(0.800);">Mode</div>
<div class="inp" style="left:939px;top:192.500px;width:81.500px;height:12px"></div>
<div class="t" style="left:943.5px;top:194px;font-size:7.5px;line-height:9px;color:#e4e4e4;transform:scaleX(0.745);">RGB Color</div>
<svg class="a" style="left:1013px;top:197px" width="6" height="4" viewBox="0 0 6 4"><path d="M0.500 0.500L3 3L5.500 0.500" stroke="#a8a8a8" fill="none"/></svg>
<div class="inp" style="left:939px;top:210px;width:81.500px;height:12.500px"></div>
<div class="t" style="left:943.5px;top:211.8px;font-size:7.5px;line-height:9px;color:#e4e4e4;transform:scaleX(0.822);">16 Bits/Channel</div>
<svg class="a" style="left:1013px;top:214.500px" width="6" height="4" viewBox="0 0 6 4"><path d="M0.500 0.500L3 3L5.500 0.500" stroke="#a8a8a8" fill="none"/></svg>
<div class="t" style="left:926px;top:230px;font-size:7.5px;line-height:9px;color:#d0d0d0;transform:scaleX(0.783);">Fill</div>
<div class="a" style="left:938.500px;top:229px;width:11.500px;height:11.500px;background:#565656;border:1px solid #474747"></div>
<div class="inp" style="left:953px;top:229px;width:67.500px;height:12px"></div>
<div class="t" style="left:957.5px;top:230.5px;font-size:7.5px;line-height:9px;color:#e4e4e4;transform:scaleX(0.834);">Transparent</div>
<svg class="a" style="left:1013px;top:233.500px" width="6" height="4" viewBox="0 0 6 4"><path d="M0.500 0.500L3 3L5.500 0.500" stroke="#a8a8a8" fill="none"/></svg>
<div class="hl" style="left:896px;top:247px;width:170px;background:#454545"></div>
<!-- Rulers & Grids -->
<svg class="a" style="left:900.500px;top:255.500px" width="6" height="4" viewBox="0 0 6 4"><path d="M0.500 0.500L3 3L5.500 0.500" stroke="#9a9a9a" fill="none"/></svg>
<div class="t" style="left:911px;top:253px;font-size:8px;line-height:9.6px;color:#ececec;font-weight:bold;transform:scaleX(0.785);">Rulers &amp; Grids</div>
<div class="sel" style="left:903.500px;top:270.500px;width:14px;height:15.500px;background:#383838"></div>
<svg class="a" style="left:905.500px;top:273px" width="11" height="11" viewBox="0 0 11 11"><path d="M0.500 0.500H10.500V3.500H3.500V10.500H0.500Z" fill="#ececec"/><path d="M5 1V2.500M7 1V2.500M9 1V2.500M1 5H2.500M1 7H2.500M1 9H2.500" stroke="#383838" stroke-width=".7"/></svg>
<svg class="a" style="left:925.500px;top:272.500px" width="12" height="12" viewBox="0 0 12 12"><path d="M0.500 0.500H11.500V11.500H0.500ZM4.200 0.500V11.500M7.800 0.500V11.500M0.500 4.200H11.500M0.500 7.800H11.500" fill="none" stroke="#d4d4d4" stroke-width="1"/></svg>
<svg class="a" style="left:946px;top:272.500px" width="12" height="12" viewBox="0 0 12 12"><rect x="0.500" y="0.500" width="11" height="11" fill="none" stroke="#c4c4c4" stroke-width="1"/><rect x="2.500" y="2.500" width="7" height="7" fill="#6e6e6e" stroke="#9a9a9a" stroke-width=".6" stroke-dasharray="1 1"/></svg>
<div class="inp" style="left:975px;top:272.500px;width:45.500px;height:12px"></div>
<div class="t" style="left:979px;top:274px;font-size:7.5px;line-height:9px;color:#e4e4e4;transform:scaleX(0.800);">Pixels</div>
<svg class="a" style="left:1013px;top:277px" width="6" height="4" viewBox="0 0 6 4"><path d="M0.500 0.500L3 3L5.500 0.500" stroke="#a8a8a8" fill="none"/></svg>
<div class="hl" style="left:896px;top:294px;width:170px;background:#454545"></div>
<!-- Guides -->
<svg class="a" style="left:900.500px;top:303px" width="6" height="4" viewBox="0 0 6 4"><path d="M0.500 0.500L3 3L5.500 0.500" stroke="#9a9a9a" fill="none"/></svg>
<div class="t" style="left:910.5px;top:300.4px;font-size:8px;line-height:9.6px;color:#ececec;font-weight:bold;transform:scaleX(0.774);">Guides</div>
<div class="sel" style="left:903px;top:317px;width:15px;height:16px;background:#383838"></div>
<svg class="a" style="left:905px;top:319px" width="11" height="12" viewBox="0 0 11 12"><path d="M3.500 0V12M0 3.500H11M0 8.500H11" stroke="#e4e4e4" stroke-width="1.100" fill="none"/><path d="M6.500 0V12" stroke="#9c9c9c" stroke-width=".8"/></svg>
<svg class="a" style="left:925.500px;top:319px" width="13" height="13" viewBox="0 0 13 13"><path d="M3.500 0V12M7 0V7M0 3.500H11M0 7.500H7" stroke="#d4d4d4" stroke-width="1.100" fill="none"/><rect x="8" y="8.500" width="4.500" height="4" fill="#d4d4d4"/><path d="M9 8.500V7.500A1.250 1.250 0 0 1 11.500 7.500V8.500" stroke="#d4d4d4" stroke-width=".8" fill="none"/></svg>
<div class="sel" style="left:944px;top:317px;width:15px;height:16px;background:#383838"></div>
<svg class="a" style="left:946.500px;top:319px" width="11" height="12" viewBox="0 0 11 12"><path d="M2.500 0V12M0 3.500H8" stroke="#e4e4e4" stroke-width="1.100" fill="none"/><path d="M8 3V9M6 7L8 9.500L10 7" stroke="#e4e4e4" stroke-width="1" fill="none"/></svg>
<div class="inp" style="left:975px;top:320.500px;width:45.500px;height:12.500px"></div>
<div class="a" style="left:979px;top:326.500px;width:27px;height:1.500px;background:#dcdcdc"></div>
<svg class="a" style="left:1013px;top:325px" width="6" height="4" viewBox="0 0 6 4"><path d="M0.500 0.500L3 3L5.500 0.500" stroke="#a8a8a8" fill="none"/></svg>
<div class="hl" style="left:896px;top:340px;width:170px;background:#454545"></div>
<svg class="a" style="left:900.500px;top:350.500px" width="6" height="4" viewBox="0 0 6 4"><path d="M0.500 0.500L3 3L5.500 0.500" stroke="#9a9a9a" fill="none"/></svg>
<div class="t" style="left:911px;top:347.7px;font-size:8px;line-height:9.6px;color:#ececec;font-weight:bold;transform:scaleX(0.795);">Quick Actions</div>
<div class="a" style="left:896px;top:385px;width:184px;height:3px;background:#404040"></div>

<!-- LAYERS PANEL -->
<div id="layers" class="a"></div>
<div class="a" style="left:896px;top:388px;width:184px;height:19px;background:#424242"></div>
<div class="a" style="left:896px;top:388px;width:30px;height:20px;background:#535353"></div>
<div class="t" style="left:901.5px;top:392.2px;font-size:8px;line-height:9.6px;color:#f0f0f0;font-weight:bold;transform:scaleX(0.737);">Layers</div>
<div class="a" style="left:1065px;top:394.500px;width:7px;height:1px;background:#c8c8c8;box-shadow:0 2.500px 0 #c8c8c8,0 5px 0 #c8c8c8"></div>
<div class="inp" style="left:899.500px;top:414px;width:52.500px;height:12px"></div>
<svg class="a" style="left:903px;top:416px" width="8" height="8" viewBox="0 0 8 8"><circle cx="3" cy="3" r="2.300" fill="none" stroke="#e4e4e4" stroke-width="1.100"/><path d="M4.800 4.800L7.300 7.300" stroke="#e4e4e4" stroke-width="1.300"/></svg>
<div class="t" style="left:912px;top:415.5px;font-size:7.5px;line-height:9px;color:#e4e4e4;font-weight:bold;transform:scaleX(0.750);">Kind</div>
<svg class="a" style="left:944.500px;top:418.500px" width="6" height="4" viewBox="0 0 6 4"><path d="M0.500 0.500L3 3L5.500 0.500" stroke="#a8a8a8" fill="none"/></svg>
<svg class="a" style="left:958px;top:413px" width="86" height="14" viewBox="958 413 86 14"><g fill="none" stroke="#dcdcdc" stroke-width="1"><rect x="960" y="416.500" width="8" height="7"/><path d="M961 422L963 419.500L964.500 421L966 419L967.500 422Z" fill="#dcdcdc" stroke="none"/><circle cx="979.300" cy="420" r="3.600"/><path d="M979.300 416.400A3.600 3.600 0 0 1 979.300 423.600Z" fill="#dcdcdc" stroke="none"/></g><text x="990.500" y="424" font-family="Liberation Serif,serif" font-weight="bold" font-size="10.500" fill="#e0e0e0">T</text><g fill="none" stroke="#dcdcdc" stroke-width="1"><rect x="1006" y="417.500" width="6" height="5.500"/></g><g fill="#dcdcdc"><rect x="1004.800" y="416.300" width="2.200" height="2.200"/><rect x="1011" y="416.300" width="2.200" height="2.200"/><rect x="1004.800" y="422" width="2.200" height="2.200"/><rect x="1011" y="422" width="2.200" height="2.200"/><path d="M1021 416H1025.500L1028 418.500V424.500H1021Z"/></g><rect x="1022.300" y="420.500" width="3" height="3" fill="#535353"/><circle cx="1038" cy="416.300" r="2.700" fill="#e8e8e8"/><rect x="1035.500" y="418" width="5" height="7" rx="2.500" fill="#474747"/><circle cx="1038" cy="416.300" r="2.700" fill="#e8e8e8"/></svg>
<div class="hl" style="left:896px;top:430px;width:184px;background:#494949"></div>
<div class="inp" style="left:900.500px;top:434.500px;width:77px;height:11px;background:#4b4b4b"></div>
<div class="t" style="left:904px;top:435.5px;font-size:7.5px;line-height:9px;color:#767676;transform:scaleX(0.786);">Normal</div>
<svg class="a" style="left:970px;top:438.500px" width="6" height="4" viewBox="0 0 6 4"><path d="M0.500 0.500L3 3L5.500 0.500" stroke="#6a6a6a" fill="none"/></svg>
<div class="t" style="left:983px;top:435.5px;font-size:7.5px;line-height:9px;color:#7c7c7c;transform:scaleX(0.800);">Opacity:</div>
<div class="inp" style="left:1009px;top:434.500px;width:20px;height:11px;background:#4a4a4a;border:1px solid #444"></div>
<div class="t" style="left:1011.5px;top:436.1px;font-size:6.5px;line-height:7.8px;color:#666;transform:scaleX(0.842);">100%</div>
<svg class="a" style="left:1032px;top:438.500px" width="6" height="4" viewBox="0 0 6 4"><path d="M0.500 0.500L3 3L5.500 0.500" stroke="#666" fill="none"/></svg>
<div class="hl" style="left:896px;top:449px;width:184px;background:#494949"></div>
<div class="t" style="left:900px;top:454.5px;font-size:7.5px;line-height:9px;color:#7c7c7c;transform:scaleX(0.781);">Lock:</div>
<svg class="a" style="left:918px;top:453px" width="68" height="12" viewBox="918 453 68 12"><g fill="#bcbcbc"><rect x="920.500" y="455.500" width="7" height="7" fill="none" stroke="#bcbcbc" stroke-width=".8"/><rect x="921" y="456" width="2" height="2"/><rect x="925" y="456" width="2" height="2"/><rect x="923" y="458" width="2" height="2"/><rect x="921" y="460" width="2" height="2"/><rect x="925" y="460" width="2" height="2"/><path d="M941.500 454.500L942.300 455.300L937.500 461L936 459.500Z"/><path d="M935.500 460.300L936.800 461.600C936.200 463 934.800 463.300 933.800 463C934.600 462.300 934.500 461 935.500 460.300Z"/><path d="M951.800 454.300L953.500 456.300H952.400V458.400H954.500V457.300L956.500 459L954.500 460.700V459.600H952.400V461.700H953.500L951.800 463.700L950.100 461.700H951.200V459.600H949.100V460.700L947.100 459L949.100 457.300V458.400H951.200V456.300H950.100Z"/></g><g fill="none" stroke="#bcbcbc" stroke-width="1"><path d="M963 454.500V461.500H970M961 456.500H968V463.500"/></g><g fill="#c4c4c4"><rect x="976" y="458.500" width="7" height="5" rx=".5"/></g><path d="M977.500 458.500V457A2 2 0 0 1 981.500 457V458.500" fill="none" stroke="#c4c4c4" stroke-width="1"/></svg>
<div class="t" style="left:996.5px;top:454.5px;font-size:7.5px;line-height:9px;color:#7c7c7c;transform:scaleX(0.729);">Fill:</div>
<div class="inp" style="left:1009px;top:453.500px;width:20px;height:11px;background:#4a4a4a;border:1px solid #444"></div>
<div class="t" style="left:1011.5px;top:455.1px;font-size:6.5px;line-height:7.8px;color:#666;transform:scaleX(0.842);">100%</div>
<svg class="a" style="left:1032px;top:457.500px" width="6" height="4" viewBox="0 0 6 4"><path d="M0.500 0.500L3 3L5.500 0.500" stroke="#666" fill="none"/></svg>
<div class="hl" style="left:896px;top:469.500px;width:170px;background:#464646"></div>
<div class="a" style="left:916px;top:470px;width:1px;height:236px;background:#484848"></div>
<svg class="a" style="left:900.500px;top:475px" width="11" height="8" viewBox="0 0 11 8"><path d="M0.500 4C2.500 1 8.500 1 10.500 4C8.500 7 2.500 7 0.500 4Z" fill="#949494"/><circle cx="5.500" cy="4" r="1.800" fill="#535353"/><circle cx="5.500" cy="4" r=".8" fill="#949494"/></svg>
<svg class="a" style="left:926px;top:477px" width="6" height="4" viewBox="0 0 6 4"><path d="M0.500 0.500L3 3L5.500 0.500" stroke="#8a8a8a" fill="none"/></svg>
<svg class="a" style="left:935px;top:474.500px" width="10" height="9" viewBox="0 0 10 9"><path d="M0.500 1H3.800L4.800 2.300H9.500V3.500H0.500Z" fill="#e4e4e4"/><path d="M0.500 4.300H9.500V8.500H0.500Z" fill="#e4e4e4"/></svg>
<div class="t" style="left:951.5px;top:474.8px;font-size:7.5px;line-height:9px;color:#e8e8e8;transform:scaleX(0.805);">edita text</div>
<div class="hl" style="left:896px;top:486.700px;width:170px;background:#474747"></div>
<svg class="a" style="left:900.500px;top:497px" width="11" height="8" viewBox="0 0 11 8"><path d="M0.500 4C2.500 1 8.500 1 10.500 4C8.500 7 2.500 7 0.500 4Z" fill="#949494"/><circle cx="5.500" cy="4" r="1.800" fill="#535353"/><circle cx="5.500" cy="4" r=".8" fill="#949494"/></svg>
<div class="t" style="left:941.500px;top:492.7px;font-family:'Liberation Serif',serif;font-size:15px;line-height:16px;color:#dcdcdc;transform:scaleX(1.080)">T</div>
<div class="t" style="left:962.5px;top:496.5px;font-size:7.5px;line-height:9px;color:#e4e4e4;transform:scaleX(0.740);">Layer 2</div>
<div class="hl" style="left:896px;top:515.3px;width:170px;background:#474747"></div>
<svg class="a" style="left:900.500px;top:525.6px" width="11" height="8" viewBox="0 0 11 8"><path d="M0.500 4C2.500 1 8.500 1 10.500 4C8.500 7 2.500 7 0.500 4Z" fill="#949494"/><circle cx="5.500" cy="4" r="1.800" fill="#535353"/><circle cx="5.500" cy="4" r=".8" fill="#949494"/></svg>
<div class="a" style="left:937.500px;top:519.3px;width:15.500px;height:20.500px;background:repeating-conic-gradient(#d4d4d4 0 25%,#fff 0 50%) 0 0/5px 5px;border:1px solid #eee"></div>
<div class="a" style="left:939.500px;top:521.6px;width:3px;height:4px;background:#8a6a5a;opacity:.7"></div>
<div class="t" style="left:959px;top:525.1px;font-size:7.5px;line-height:9px;color:#e4e4e4;transform:scaleX(0.740);">Layer 3</div>
<div class="hl" style="left:896px;top:543.9px;width:170px;background:#474747"></div>
<svg class="a" style="left:900.500px;top:554.2px" width="11" height="8" viewBox="0 0 11 8"><path d="M0.500 4C2.500 1 8.500 1 10.500 4C8.500 7 2.500 7 0.500 4Z" fill="#949494"/><circle cx="5.500" cy="4" r="1.800" fill="#535353"/><circle cx="5.500" cy="4" r=".8" fill="#949494"/></svg>
<div class="t" style="left:941.500px;top:549.9px;font-family:'Liberation Serif',serif;font-size:15px;line-height:16px;color:#dcdcdc;transform:scaleX(1.080)">T</div>
<div class="t" style="left:962.5px;top:553.7px;font-size:7.5px;line-height:9px;color:#e4e4e4;transform:scaleX(0.782);">cittaXXXXXXX...&lt;&lt;&lt;&lt;&lt;&lt;&lt;&lt;&lt;0 d</div>
<div class="hl" style="left:896px;top:572.5px;width:170px;background:#474747"></div>
<div class="a" style="left:901px;top:582.3px;width:9px;height:9px;border:1px solid #5c5c5c"></div>
<div class="t" style="left:941.500px;top:578.5px;font-family:'Liberation Serif',serif;font-size:15px;line-height:16px;color:#dcdcdc;transform:scaleX(1.080)">T</div>
<div class="t" style="left:962.5px;top:582.3px;font-size:7.5px;line-height:9px;color:#e4e4e4;transform:scaleX(0.679);">1aa</div>
<div class="hl" style="left:896px;top:601.1px;width:170px;background:#474747"></div>
<svg class="a" style="left:900.500px;top:611.4px" width="11" height="8" viewBox="0 0 11 8"><path d="M0.500 4C2.500 1 8.500 1 10.500 4C8.500 7 2.500 7 0.500 4Z" fill="#949494"/><circle cx="5.500" cy="4" r="1.800" fill="#535353"/><circle cx="5.500" cy="4" r=".8" fill="#949494"/></svg>
<div class="t" style="left:941.500px;top:607.1px;font-family:'Liberation Serif',serif;font-size:15px;line-height:16px;color:#dcdcdc;transform:scaleX(1.080)">T</div>
<div class="t" style="left:962.5px;top:610.9px;font-size:7.5px;line-height:9px;color:#e4e4e4;transform:scaleX(0.719);">169</div>
<div class="hl" style="left:896px;top:629.7px;width:170px;background:#474747"></div>
<svg class="a" style="left:900.500px;top:640px" width="11" height="8" viewBox="0 0 11 8"><path d="M0.500 4C2.500 1 8.500 1 10.500 4C8.500 7 2.500 7 0.500 4Z" fill="#949494"/><circle cx="5.500" cy="4" r="1.800" fill="#535353"/><circle cx="5.500" cy="4" r=".8" fill="#949494"/></svg>
<div class="t" style="left:941.500px;top:635.7px;font-family:'Liberation Serif',serif;font-size:15px;line-height:16px;color:#dcdcdc;transform:scaleX(1.080)">T</div>
<div class="t" style="left:962.5px;top:639.5px;font-size:7.5px;line-height:9px;color:#e4e4e4;transform:scaleX(0.640);">m</div>
<div class="hl" style="left:896px;top:658.3px;width:170px;background:#474747"></div>
<svg class="a" style="left:900.500px;top:668.6px" width="11" height="8" viewBox="0 0 11 8"><path d="M0.500 4C2.500 1 8.500 1 10.500 4C8.500 7 2.500 7 0.500 4Z" fill="#949494"/><circle cx="5.500" cy="4" r="1.800" fill="#535353"/><circle cx="5.500" cy="4" r=".8" fill="#949494"/></svg>
<div class="t" style="left:941.500px;top:664.3px;font-family:'Liberation Serif',serif;font-size:15px;line-height:16px;color:#dcdcdc;transform:scaleX(1.080)">T</div>
<div class="t" style="left:962.5px;top:668.1px;font-size:7.5px;line-height:9px;color:#e4e4e4;transform:scaleX(0.879);">129......</div>
<div class="hl" style="left:896px;top:686.9px;width:170px;background:#474747"></div>
<svg class="a" style="left:900.500px;top:697.2px" width="11" height="8" viewBox="0 0 11 8"><path d="M0.500 4C2.500 1 8.500 1 10.500 4C8.500 7 2.500 7 0.500 4Z" fill="#949494"/><circle cx="5.500" cy="4" r="1.800" fill="#535353"/><circle cx="5.500" cy="4" r=".8" fill="#949494"/></svg>
<div class="t" style="left:941.500px;top:692.9px;font-family:'Liberation Serif',serif;font-size:15px;line-height:16px;color:#dcdcdc;transform:scaleX(1.080)">T</div>
<div class="t" style="left:962.5px;top:696.7px;font-size:7.5px;line-height:9px;color:#e4e4e4;transform:scaleX(0.826);">01.01.1990</div>
<div class="hl" style="left:896px;top:715.5px;width:170px;background:#474747"></div>
<div class="a" style="left:1066px;top:470px;width:8px;height:236px;background:#484848"></div>
<div class="a" style="left:1066.500px;top:491px;width:7px;height:64px;background:#6a6a6a;border-radius:1px"></div>
<svg class="a" style="left:1067px;top:474px" width="6" height="4" viewBox="0 0 6 4"><path d="M0.500 3.500L3 1L5.500 3.500" stroke="#999" fill="none"/></svg>
<div class="a" style="left:896px;top:706px;width:184px;height:14px;background:#535353;border-top:1px solid #464646"></div>
<svg class="a" style="left:940px;top:707px" width="120" height="13" viewBox="940 707 120 13"><g fill="none" stroke="#6e6e6e" stroke-width="1"><rect x="948" y="711.500" width="4.500" height="3" rx="1.500"/><rect x="952.500" y="711.500" width="4.500" height="3" rx="1.500"/></g><text x="968" y="717" font-family="Liberation Serif,serif" font-style="italic" font-size="9" fill="#b0b0b0">fx</text><rect x="982.500" y="709.500" width="8" height="7" fill="#d4d4d4"/><circle cx="986.500" cy="713" r="2" fill="#535353"/><circle cx="1003.500" cy="713" r="3.800" fill="none" stroke="#d4d4d4" stroke-width="1"/><path d="M1003.500 709.200A3.800 3.800 0 0 1 1003.500 716.800Z" fill="#d4d4d4"/><path d="M1015.500 710H1018.800L1019.800 711.300H1024.500V716.500H1015.500Z" fill="#d4d4d4"/><rect x="1034.500" y="709.500" width="7.500" height="7.500" fill="none" stroke="#d4d4d4" stroke-width="1"/><path d="M1038.250 711.500V715.500M1036.250 713.500H1040.250" stroke="#d4d4d4" stroke-width="1"/><path d="M1052 711H1058M1053 711V717.500H1057V711M1054 709.800H1056" fill="none" stroke="#7a7a7a" stroke-width="1"/></svg>

<svg class="a" style="left:850px;top:655px" width="230" height="50" viewBox="850 655 230 50"><g fill="none" stroke-width="2.700" stroke-linejoin="miter"><path d="M875.500 667.300H859V695.600H875.500M859 680.800H874M881.600 666.200V696.700M898.300 666.200L882 683M887.300 677.800L899.300 696.700M900.3 681.5A10 14.700 0 1 0 920.3 681.5A10 14.700 0 1 0 900.3 681.5M940.7 670.5A9.6 14.7 0 1 0 942.6 688.8V683.5H935.8M964 667.300H950.300V695.600H964M950.300 680.800H962.500M966 696.700L976.700 666.500L987.700 696.700M969.700 686.200H983.800" stroke="#141414" opacity=".88"/><path d="M1000.0 681.5A10 14.700 0 1 0 1020.0 681.5A10 14.700 0 1 0 1000.0 681.5M1027.200 696.700V667.300H1035.500A7.300 7.400 0 0 1 1035.500 682.100H1027.200M1035.500 682.100L1043.500 696.700M1064.4 670.5A9.6 14.7 0 1 0 1066.3 688.8V683.5H1059.5" stroke="#7d9a2b" opacity=".92"/></g><rect x="992.300" y="693.500" width="2.800" height="3.200" fill="#141414" opacity=".88"/></svg>

</body></html>
